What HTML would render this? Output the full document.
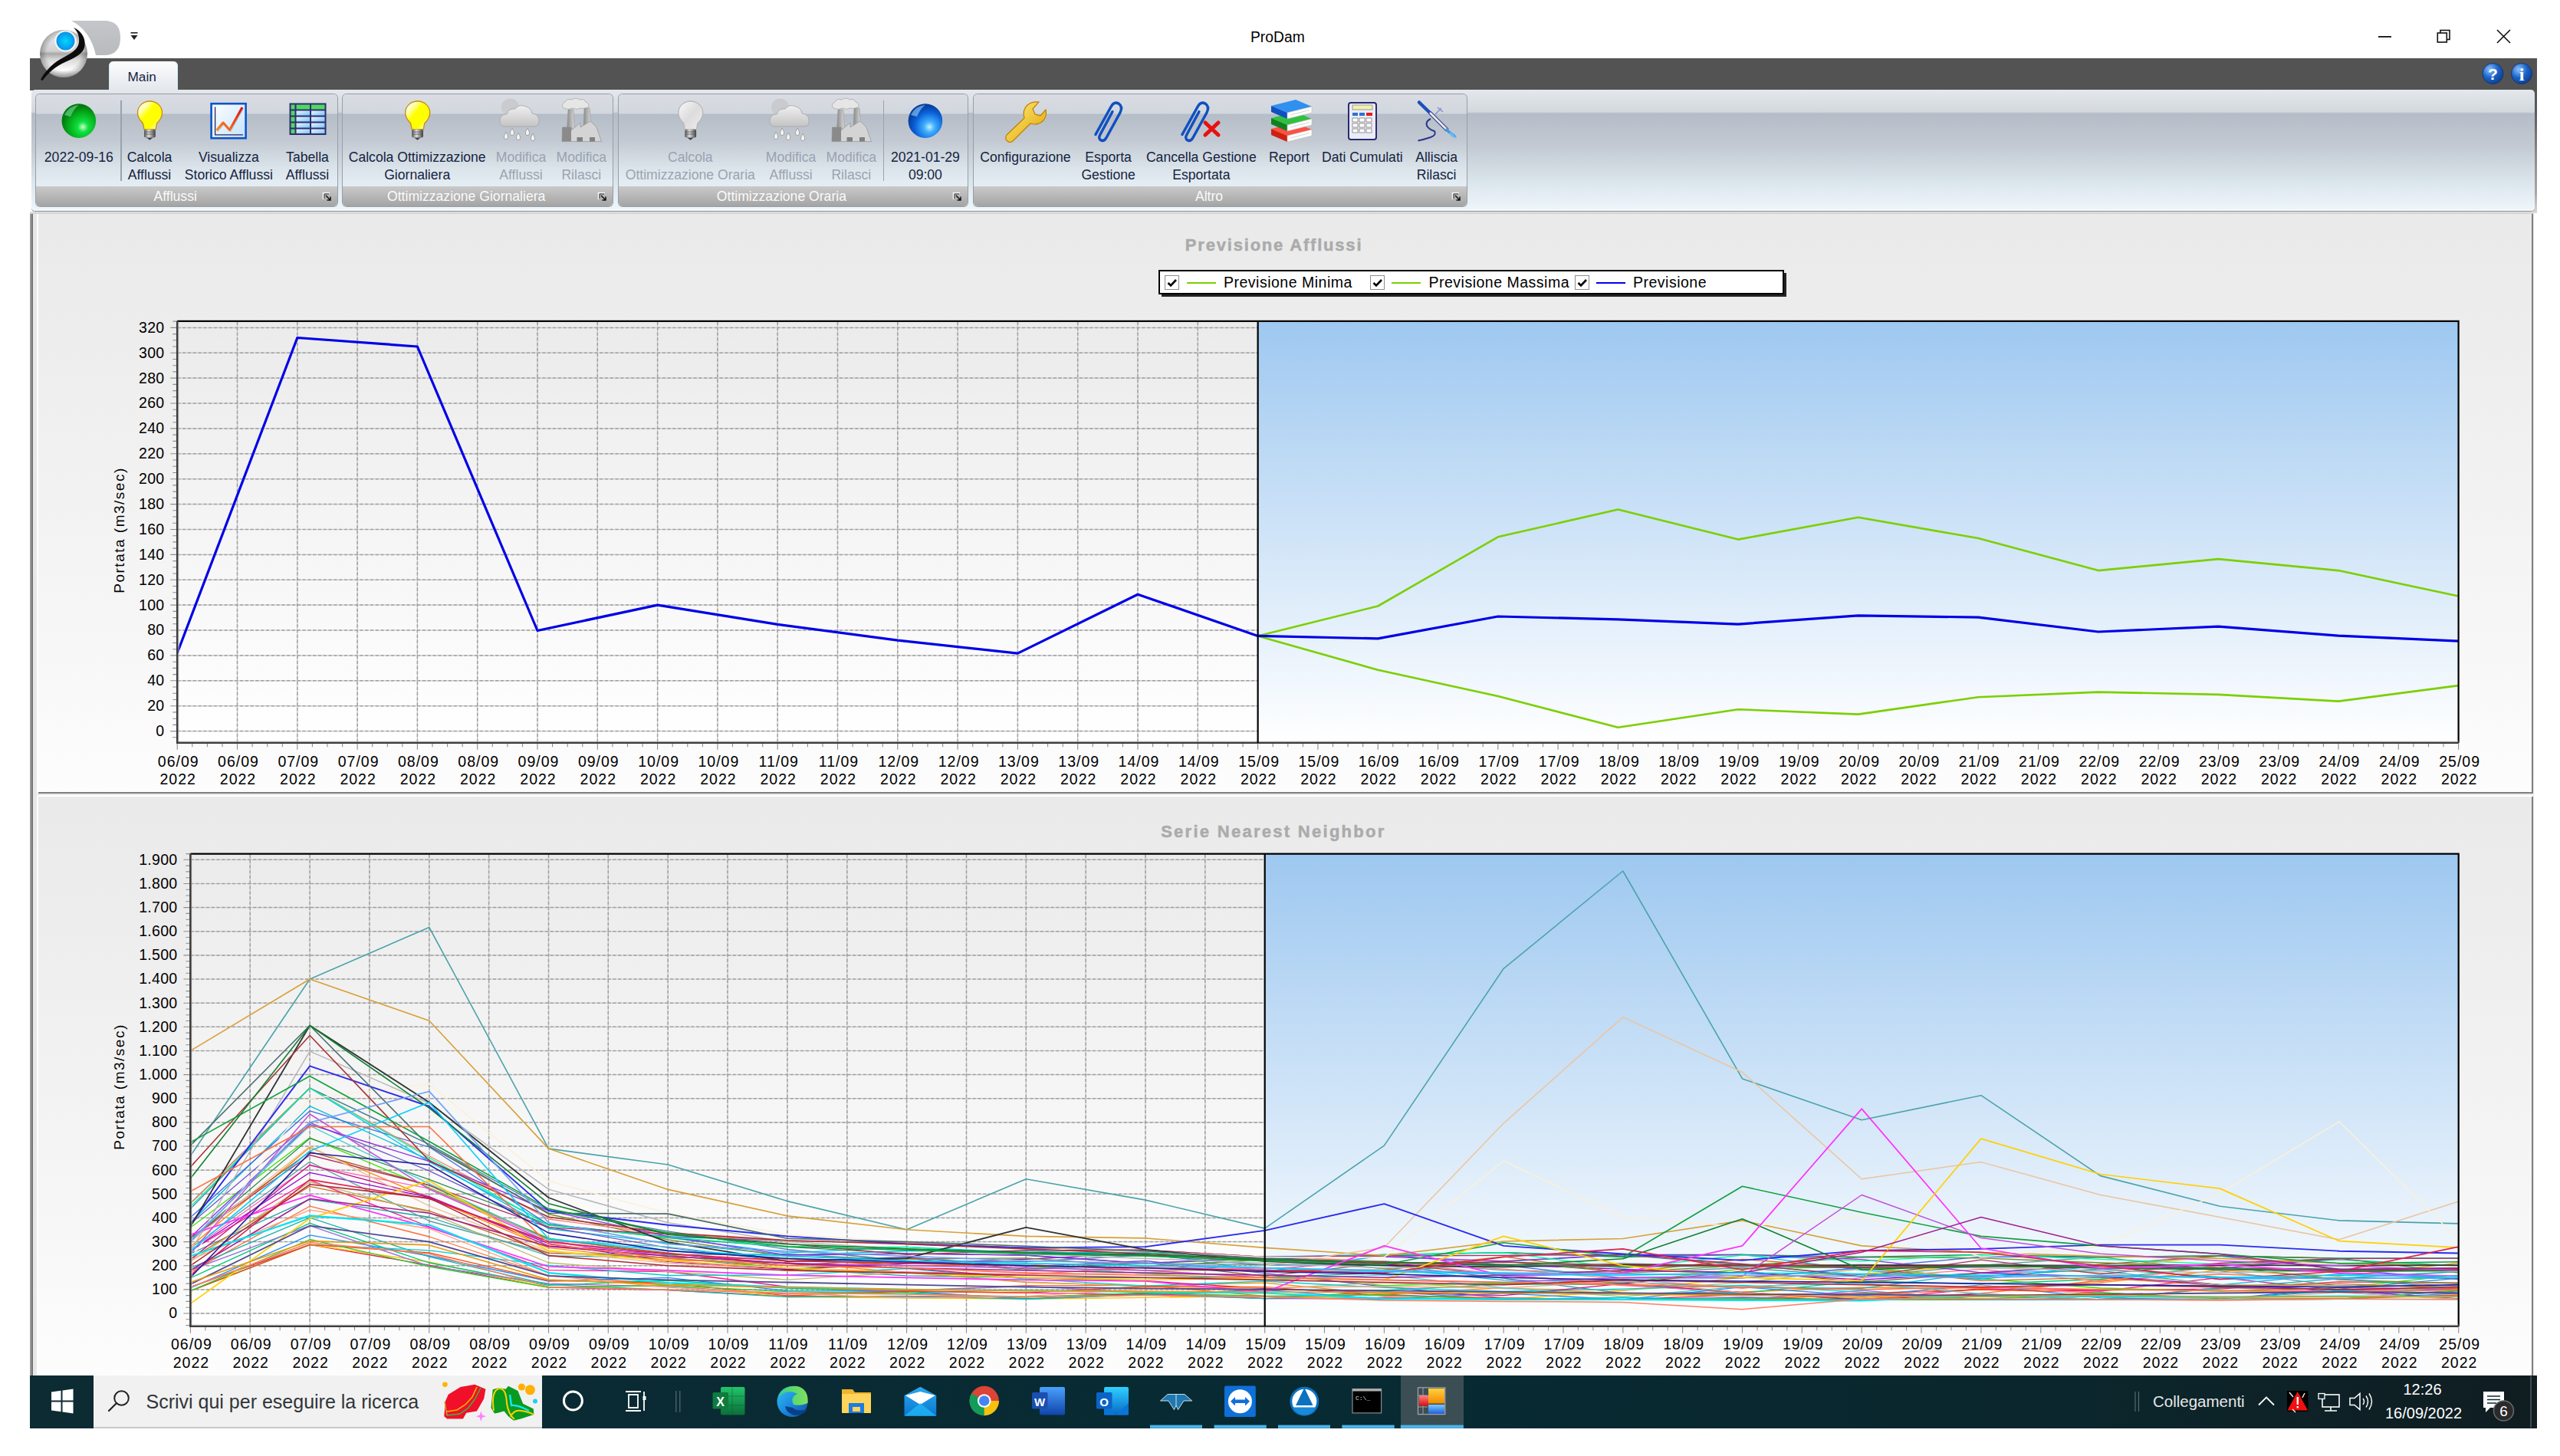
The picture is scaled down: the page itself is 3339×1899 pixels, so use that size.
<!DOCTYPE html>
<html><head><meta charset="utf-8">
<style>
html,body{margin:0;padding:0;}
body{width:3339px;height:1899px;position:relative;overflow:hidden;background:#fff;font-family:"Liberation Sans", sans-serif;}
.a{position:absolute;}
.t{position:absolute;white-space:nowrap;line-height:1;}
</style></head><body>
<div class="a" style="left:39px;top:76px;width:3270px;height:42px;background:#535353;"></div><div class="a" style="left:3303px;top:110px;width:6px;height:168px;background:linear-gradient(#535353 0%,#5a5a5a 20%,#8a8a8a 55%,#a8a8a8 85%,#d8d8d8 100%);"></div><div class="a" style="left:142px;top:79.5px;width:90px;height:40px;border-radius:6px 6px 0 0;background:linear-gradient(#fbfcfd,#e2e6eb);box-shadow:inset 1px 0 0 #cdeff5, inset -1px 0 0 #cdeff5;"></div><div class="t" style="left:166.5px;top:92px;font-size:17.2px;color:#15233f;">Main</div><svg class="a" style="left:3230px;top:80px" width="80" height="34" viewBox="3230 80 80 34">
<defs><radialGradient id="hlp" cx="0.35" cy="0.3" r="0.8"><stop offset="0" stop-color="#8fc3ff"/><stop offset="0.5" stop-color="#1a63c8"/><stop offset="1" stop-color="#0a3a8a"/></radialGradient></defs>
<circle cx="3251.5" cy="96" r="13.5" fill="url(#hlp)" stroke="#0c2f6a" stroke-width="0.8"/>
<text x="3251.5" y="104" font-family="Liberation Sans" font-weight="bold" font-size="21" fill="#fff" text-anchor="middle">?</text>
<circle cx="3289" cy="96" r="13.5" fill="url(#hlp)" stroke="#0c2f6a" stroke-width="0.8"/>
<text x="3289" y="105" font-family="Liberation Serif" font-weight="bold" font-size="24" fill="#fff" text-anchor="middle">i</text>
</svg><div class="a" style="left:41px;top:117px;width:3265px;height:157.5px;border-radius:5px;background:linear-gradient(#e4e8ec 0px,#d3d8de 29px,#b4bcc7 31px,#c3cad3 75px,#dbe5ec 120px,#eaf3f8 150px,#f1f7fa 159px);box-shadow:0 1px 0 #8c8c8c, 0 2px 0 #d4d4d4, inset 0 -2px 0 #f4f8fb;"></div><div class="a" style="left:47.4px;top:122.6px;width:392.9px;height:146.5px;border-radius:5px;overflow:hidden;box-shadow:0 0 0 1px #979ea6;background:linear-gradient(#d9dde3 0px,#d2d7dd 25px,#b5bdc8 26px,#c2c9d2 60px,#dae3ea 95px,#e6eef4 120px);"><div class="a" style="left:0;top:120.2px;width:392.9px;height:26.3px;background:linear-gradient(#c9c9c9,#a4a4a4);"></div></div><div class="t" style="left:28.7px;width:400px;text-align:center;top:247.5px;font-size:17.6px;color:#fafafa;">Afflussi</div><svg class="a" style="left:419.8px;top:249.5px" width="14" height="14" viewBox="0 0 14 14"><path d="M1.5 10 V1.5 H10" fill="none" stroke="#f4f4f4" stroke-width="1.6"/><path d="M3 9 V3 H9" fill="none" stroke="#333" stroke-width="1"/><path d="M5 5 L10.5 10.5 M6.5 11 H11 V6.5" fill="none" stroke="#111" stroke-width="1.5"/></svg><div class="a" style="left:447.3px;top:122.6px;width:352.0px;height:146.5px;border-radius:5px;overflow:hidden;box-shadow:0 0 0 1px #979ea6;background:linear-gradient(#d9dde3 0px,#d2d7dd 25px,#b5bdc8 26px,#c2c9d2 60px,#dae3ea 95px,#e6eef4 120px);"><div class="a" style="left:0;top:120.2px;width:352.0px;height:26.3px;background:linear-gradient(#c9c9c9,#a4a4a4);"></div></div><div class="t" style="left:408.2px;width:400px;text-align:center;top:247.5px;font-size:17.6px;color:#fafafa;">Ottimizzazione Giornaliera</div><svg class="a" style="left:778.8px;top:249.5px" width="14" height="14" viewBox="0 0 14 14"><path d="M1.5 10 V1.5 H10" fill="none" stroke="#f4f4f4" stroke-width="1.6"/><path d="M3 9 V3 H9" fill="none" stroke="#333" stroke-width="1"/><path d="M5 5 L10.5 10.5 M6.5 11 H11 V6.5" fill="none" stroke="#111" stroke-width="1.5"/></svg><div class="a" style="left:806.6px;top:122.6px;width:455.6px;height:146.5px;border-radius:5px;overflow:hidden;box-shadow:0 0 0 1px #979ea6;background:linear-gradient(#d9dde3 0px,#d2d7dd 25px,#b5bdc8 26px,#c2c9d2 60px,#dae3ea 95px,#e6eef4 120px);"><div class="a" style="left:0;top:120.2px;width:455.6px;height:26.3px;background:linear-gradient(#c9c9c9,#a4a4a4);"></div></div><div class="t" style="left:819.4px;width:400px;text-align:center;top:247.5px;font-size:17.6px;color:#fafafa;">Ottimizzazione Oraria</div><svg class="a" style="left:1241.7px;top:249.5px" width="14" height="14" viewBox="0 0 14 14"><path d="M1.5 10 V1.5 H10" fill="none" stroke="#f4f4f4" stroke-width="1.6"/><path d="M3 9 V3 H9" fill="none" stroke="#333" stroke-width="1"/><path d="M5 5 L10.5 10.5 M6.5 11 H11 V6.5" fill="none" stroke="#111" stroke-width="1.5"/></svg><div class="a" style="left:1269.8px;top:122.6px;width:643.7px;height:146.5px;border-radius:5px;overflow:hidden;box-shadow:0 0 0 1px #979ea6;background:linear-gradient(#d9dde3 0px,#d2d7dd 25px,#b5bdc8 26px,#c2c9d2 60px,#dae3ea 95px,#e6eef4 120px);"><div class="a" style="left:0;top:120.2px;width:643.7px;height:26.3px;background:linear-gradient(#c9c9c9,#a4a4a4);"></div></div><div class="t" style="left:1377.0px;width:400px;text-align:center;top:247.5px;font-size:17.6px;color:#fafafa;">Altro</div><svg class="a" style="left:1893.0px;top:249.5px" width="14" height="14" viewBox="0 0 14 14"><path d="M1.5 10 V1.5 H10" fill="none" stroke="#f4f4f4" stroke-width="1.6"/><path d="M3 9 V3 H9" fill="none" stroke="#333" stroke-width="1"/><path d="M5 5 L10.5 10.5 M6.5 11 H11 V6.5" fill="none" stroke="#111" stroke-width="1.5"/></svg><div class="t" style="left:-47.2px;width:300px;text-align:center;top:196.6px;font-size:17.6px;color:#15233f;">2022-09-16</div><div class="t" style="left:45.0px;width:300px;text-align:center;top:196.6px;font-size:17.6px;color:#15233f;">Calcola</div><div class="t" style="left:45.0px;width:300px;text-align:center;top:220.2px;font-size:17.6px;color:#15233f;">Afflussi</div><div class="t" style="left:148.4px;width:300px;text-align:center;top:196.6px;font-size:17.6px;color:#15233f;">Visualizza</div><div class="t" style="left:148.4px;width:300px;text-align:center;top:220.2px;font-size:17.6px;color:#15233f;">Storico Afflussi</div><div class="t" style="left:251.0px;width:300px;text-align:center;top:196.6px;font-size:17.6px;color:#15233f;">Tabella</div><div class="t" style="left:251.0px;width:300px;text-align:center;top:220.2px;font-size:17.6px;color:#15233f;">Afflussi</div><div class="t" style="left:394.2px;width:300px;text-align:center;top:196.6px;font-size:17.6px;color:#15233f;">Calcola Ottimizzazione</div><div class="t" style="left:394.2px;width:300px;text-align:center;top:220.2px;font-size:17.6px;color:#15233f;">Giornaliera</div><div class="t" style="left:529.5px;width:300px;text-align:center;top:196.6px;font-size:17.6px;color:#9aa3b0;">Modifica</div><div class="t" style="left:529.5px;width:300px;text-align:center;top:220.2px;font-size:17.6px;color:#9aa3b0;">Afflussi</div><div class="t" style="left:608.3px;width:300px;text-align:center;top:196.6px;font-size:17.6px;color:#9aa3b0;">Modifica</div><div class="t" style="left:608.3px;width:300px;text-align:center;top:220.2px;font-size:17.6px;color:#9aa3b0;">Rilasci</div><div class="t" style="left:750.3px;width:300px;text-align:center;top:196.6px;font-size:17.6px;color:#9aa3b0;">Calcola</div><div class="t" style="left:750.3px;width:300px;text-align:center;top:220.2px;font-size:17.6px;color:#9aa3b0;">Ottimizzazione Oraria</div><div class="t" style="left:881.6px;width:300px;text-align:center;top:196.6px;font-size:17.6px;color:#9aa3b0;">Modifica</div><div class="t" style="left:881.6px;width:300px;text-align:center;top:220.2px;font-size:17.6px;color:#9aa3b0;">Afflussi</div><div class="t" style="left:960.3px;width:300px;text-align:center;top:196.6px;font-size:17.6px;color:#9aa3b0;">Modifica</div><div class="t" style="left:960.3px;width:300px;text-align:center;top:220.2px;font-size:17.6px;color:#9aa3b0;">Rilasci</div><div class="t" style="left:1056.9px;width:300px;text-align:center;top:196.6px;font-size:17.6px;color:#15233f;">2021-01-29</div><div class="t" style="left:1056.9px;width:300px;text-align:center;top:220.2px;font-size:17.6px;color:#15233f;">09:00</div><div class="t" style="left:1187.4px;width:300px;text-align:center;top:196.6px;font-size:17.6px;color:#15233f;">Configurazione</div><div class="t" style="left:1295.6px;width:300px;text-align:center;top:196.6px;font-size:17.6px;color:#15233f;">Esporta</div><div class="t" style="left:1295.6px;width:300px;text-align:center;top:220.2px;font-size:17.6px;color:#15233f;">Gestione</div><div class="t" style="left:1416.8px;width:300px;text-align:center;top:196.6px;font-size:17.6px;color:#15233f;">Cancella Gestione</div><div class="t" style="left:1416.8px;width:300px;text-align:center;top:220.2px;font-size:17.6px;color:#15233f;">Esportata</div><div class="t" style="left:1531.5px;width:300px;text-align:center;top:196.6px;font-size:17.6px;color:#15233f;">Report</div><div class="t" style="left:1626.9px;width:300px;text-align:center;top:196.6px;font-size:17.6px;color:#15233f;">Dati Cumulati</div><div class="t" style="left:1723.6px;width:300px;text-align:center;top:196.6px;font-size:17.6px;color:#15233f;">Alliscia</div><div class="t" style="left:1723.6px;width:300px;text-align:center;top:220.2px;font-size:17.6px;color:#15233f;">Rilasci</div><div class="a" style="left:157.3px;top:130.5px;width:1.3px;height:105px;background:#9aa2ac;"></div><div class="a" style="left:1151.5px;top:130.5px;width:1.3px;height:105px;background:#9aa2ac;"></div><svg class="a" style="left:0;top:0" width="2000" height="200" viewBox="0 0 2000 200"><defs>
<radialGradient id="gorb" cx="0.62" cy="0.68" r="0.62"><stop offset="0" stop-color="#c8ffc8"/><stop offset="0.25" stop-color="#10e040"/><stop offset="0.7" stop-color="#04a818"/><stop offset="1" stop-color="#027a10"/></radialGradient>
<radialGradient id="borb" cx="0.62" cy="0.68" r="0.62"><stop offset="0" stop-color="#c8f0ff"/><stop offset="0.25" stop-color="#40b0ff"/><stop offset="0.7" stop-color="#0a60d8"/><stop offset="1" stop-color="#0640a0"/></radialGradient>
<linearGradient id="bulbg" x1="0.1" y1="0.1" x2="0.9" y2="0.9"><stop offset="0" stop-color="#ffffff"/><stop offset="0.2" stop-color="#ffffa0"/><stop offset="0.4" stop-color="#ffff00"/><stop offset="0.75" stop-color="#ffff00"/><stop offset="1" stop-color="#ffffd0"/></linearGradient><linearGradient id="chline" x1="0" y1="1" x2="1" y2="0"><stop offset="0" stop-color="#ff8a20"/><stop offset="1" stop-color="#d81010"/></linearGradient>
<linearGradient id="bulbgr" x1="0" y1="0" x2="1" y2="1"><stop offset="0" stop-color="#fafafa"/><stop offset="0.5" stop-color="#dcdcdc"/><stop offset="1" stop-color="#efefef"/></linearGradient>
<linearGradient id="baseg" x1="0" y1="0" x2="1" y2="0"><stop offset="0" stop-color="#505050"/><stop offset="0.4" stop-color="#e0e0e0"/><stop offset="1" stop-color="#404040"/></linearGradient>
<linearGradient id="chg" x1="0" y1="0" x2="1" y2="1"><stop offset="0" stop-color="#ffffff"/><stop offset="1" stop-color="#c4e2fa"/></linearGradient>
<linearGradient id="cellg" x1="0" y1="0" x2="1" y2="1"><stop offset="0" stop-color="#e8f6ff"/><stop offset="1" stop-color="#7cc4f4"/></linearGradient>
<linearGradient id="wrg" x1="0" y1="0" x2="1" y2="1"><stop offset="0" stop-color="#fff080"/><stop offset="1" stop-color="#e0a000"/></linearGradient>
<linearGradient id="cloudg" x1="0" y1="0" x2="0" y2="1"><stop offset="0" stop-color="#f0f0f0"/><stop offset="1" stop-color="#c4c4c4"/></linearGradient>
<linearGradient id="facg" x1="0" y1="0" x2="1" y2="0"><stop offset="0" stop-color="#8a8a8a"/><stop offset="1" stop-color="#d8d8d8"/></linearGradient>
</defs><circle cx="102.8" cy="157.6" r="22.3" fill="url(#gorb)"/><path d="M84 150 Q90 138 103 137 Q96 142 92 152 Z" fill="#6ad08a" opacity="0.7"/><g transform="translate(0.0,0)"><path d="M188 168.8 L186.5 161 Q179.5 154 179.5 147 A16 15 0 0 1 211.5 147 Q211.5 154 204.5 161 L203 168.8 Z" fill="url(#bulbg)" stroke="#c88a10" stroke-width="1.3"/><rect x="188" y="168.8" width="14.8" height="10.6" rx="2" fill="url(#baseg)"/><path d="M189 172 H202 M189 175 H202" stroke="#555" stroke-width="0.8"/><path d="M191 179.4 L199.5 179.4 L195.3 182.8 Z" fill="#444"/></g><g transform="translate(349.2,0)"><path d="M188 168.8 L186.5 161 Q179.5 154 179.5 147 A16 15 0 0 1 211.5 147 Q211.5 154 204.5 161 L203 168.8 Z" fill="url(#bulbg)" stroke="#c88a10" stroke-width="1.3"/><rect x="188" y="168.8" width="14.8" height="10.6" rx="2" fill="url(#baseg)"/><path d="M189 172 H202 M189 175 H202" stroke="#555" stroke-width="0.8"/><path d="M191 179.4 L199.5 179.4 L195.3 182.8 Z" fill="#444"/></g><g transform="translate(705.3,0)"><path d="M188 168.8 L186.5 161 Q179.5 154 179.5 147 A16 15 0 0 1 211.5 147 Q211.5 154 204.5 161 L203 168.8 Z" fill="url(#bulbgr)" stroke="#b8b8b8" stroke-width="1.3"/><rect x="188" y="168.8" width="14.8" height="10.6" rx="2" fill="url(#baseg)"/><path d="M189 172 H202 M189 175 H202" stroke="#555" stroke-width="0.8"/><path d="M191 179.4 L199.5 179.4 L195.3 182.8 Z" fill="#444"/></g><rect x="275.6" y="135.2" width="45" height="45" fill="url(#chg)" stroke="#0a56c8" stroke-width="2.6"/><path d="M280.6 139.4 V175.8 H316.9" fill="none" stroke="#27275e" stroke-width="1.3"/><path d="M283.5 171 L292 161 L300.5 170.5 L317 141" fill="none" stroke="#9ab0c8" stroke-width="3" stroke-linejoin="round" opacity="0.5"/><path d="M282.5 170 L291 160 L299.5 169.5 L316 140" fill="none" stroke="url(#chline)" stroke-width="3" stroke-linejoin="round"/><rect x="377.5" y="134.5" width="48" height="41.5" fill="#2e2e70"/><rect x="379.5" y="136.5" width="5.0" height="6.0" fill="#50d860"/><rect x="386.5" y="136.5" width="17.5" height="6.0" fill="#50d860"/><rect x="406" y="136.5" width="17.5" height="6.0" fill="#50d860"/><rect x="379.5" y="144.5" width="5.0" height="6.0" fill="#50d860"/><rect x="386.5" y="144.5" width="17.5" height="6.0" fill="url(#cellg)"/><rect x="406" y="144.5" width="17.5" height="6.0" fill="url(#cellg)"/><rect x="379.5" y="152.5" width="5.0" height="6.0" fill="#50d860"/><rect x="386.5" y="152.5" width="17.5" height="6.0" fill="url(#cellg)"/><rect x="406" y="152.5" width="17.5" height="6.0" fill="url(#cellg)"/><rect x="379.5" y="160.5" width="5.0" height="6.0" fill="#50d860"/><rect x="386.5" y="160.5" width="17.5" height="6.0" fill="url(#cellg)"/><rect x="406" y="160.5" width="17.5" height="6.0" fill="url(#cellg)"/><rect x="379.5" y="168.5" width="5.0" height="5.5" fill="#50d860"/><rect x="386.5" y="168.5" width="17.5" height="5.5" fill="url(#cellg)"/><rect x="406" y="168.5" width="17.5" height="5.5" fill="url(#cellg)"/><g transform="translate(0.0,0)"><circle cx="665.5" cy="140" r="11.5" fill="#c9cbce"/><path d="M657 165 Q651 163 652 156 Q653 149 661 149 Q663 141 672 142 Q677 135 686 139 Q693 141 694 148 Q702 149 703 156 Q704 165 696 165 Z" fill="url(#cloudg)" stroke="#a8a8a8" stroke-width="0.9"/><g fill="#f4f4f4" stroke="#a0a0a0" stroke-width="1"><path d="M660 172 q-3 5 -2.6 7.2 q0.6 2.4 2.6 2.4 q2 0 2.6 -2.4 q0.4 -2.2 -2.6 -7.2z"/><path d="M668 167 q-3 5 -2.6 7.2 q0.6 2.4 2.6 2.4 q2 0 2.6 -2.4 q0.4 -2.2 -2.6 -7.2z"/><path d="M676 173 q-3 5 -2.6 7.2 q0.6 2.4 2.6 2.4 q2 0 2.6 -2.4 q0.4 -2.2 -2.6 -7.2z"/><path d="M688 167 q-3 5 -2.6 7.2 q0.6 2.4 2.6 2.4 q2 0 2.6 -2.4 q0.4 -2.2 -2.6 -7.2z"/><path d="M695 174 q-3 5 -2.6 7.2 q0.6 2.4 2.6 2.4 q2 0 2.6 -2.4 q0.4 -2.2 -2.6 -7.2z"/></g></g><g transform="translate(352.1,0)"><circle cx="665.5" cy="140" r="11.5" fill="#c9cbce"/><path d="M657 165 Q651 163 652 156 Q653 149 661 149 Q663 141 672 142 Q677 135 686 139 Q693 141 694 148 Q702 149 703 156 Q704 165 696 165 Z" fill="url(#cloudg)" stroke="#a8a8a8" stroke-width="0.9"/><g fill="#f4f4f4" stroke="#a0a0a0" stroke-width="1"><path d="M660 172 q-3 5 -2.6 7.2 q0.6 2.4 2.6 2.4 q2 0 2.6 -2.4 q0.4 -2.2 -2.6 -7.2z"/><path d="M668 167 q-3 5 -2.6 7.2 q0.6 2.4 2.6 2.4 q2 0 2.6 -2.4 q0.4 -2.2 -2.6 -7.2z"/><path d="M676 173 q-3 5 -2.6 7.2 q0.6 2.4 2.6 2.4 q2 0 2.6 -2.4 q0.4 -2.2 -2.6 -7.2z"/><path d="M688 167 q-3 5 -2.6 7.2 q0.6 2.4 2.6 2.4 q2 0 2.6 -2.4 q0.4 -2.2 -2.6 -7.2z"/><path d="M695 174 q-3 5 -2.6 7.2 q0.6 2.4 2.6 2.4 q2 0 2.6 -2.4 q0.4 -2.2 -2.6 -7.2z"/></g></g><g transform="translate(0.0,0)"><path d="M735 141 Q731 136 737 133 Q739 128 746 130 Q751 126 756 130 Q762 128 764 133 Q770 135 767 140 Q763 143 757 141 Q752 144 747 141 Q741 144 735 141Z" fill="#e6e6e6" stroke="#a8a8a8" stroke-width="0.8"/><path d="M741 143 L748 143 L749.5 168 L739.5 168 Z" fill="url(#facg)" stroke="#999" stroke-width="0.6"/><path d="M762 141 L769 141 L771 165 L761 165 Z" fill="url(#facg)" stroke="#999" stroke-width="0.6"/><path d="M733 184.6 L733.5 166 L745 166 L745 170 L757 160 L757 166 L770 158 L778 166 L784.5 184.6 Z" fill="#d4d4d4" stroke="#9a9a9a" stroke-width="0.8"/><path d="M733 184.6 L733.5 166 L745 166 L745 184.6Z" fill="#8a8a8a"/><rect x="752.5" y="179" width="7.5" height="5.6" fill="#808080"/><rect x="769" y="179" width="7" height="5.6" fill="#808080"/></g><g transform="translate(352.0,0)"><path d="M735 141 Q731 136 737 133 Q739 128 746 130 Q751 126 756 130 Q762 128 764 133 Q770 135 767 140 Q763 143 757 141 Q752 144 747 141 Q741 144 735 141Z" fill="#e6e6e6" stroke="#a8a8a8" stroke-width="0.8"/><path d="M741 143 L748 143 L749.5 168 L739.5 168 Z" fill="url(#facg)" stroke="#999" stroke-width="0.6"/><path d="M762 141 L769 141 L771 165 L761 165 Z" fill="url(#facg)" stroke="#999" stroke-width="0.6"/><path d="M733 184.6 L733.5 166 L745 166 L745 170 L757 160 L757 166 L770 158 L778 166 L784.5 184.6 Z" fill="#d4d4d4" stroke="#9a9a9a" stroke-width="0.8"/><path d="M733 184.6 L733.5 166 L745 166 L745 184.6Z" fill="#8a8a8a"/><rect x="752.5" y="179" width="7.5" height="5.6" fill="#808080"/><rect x="769" y="179" width="7" height="5.6" fill="#808080"/></g><circle cx="1206.9" cy="157.6" r="22.3" fill="url(#borb)"/><path d="M1188 150 Q1194 138 1207 137 Q1200 142 1196 152 Z" fill="#9ad0ff" opacity="0.6"/><path transform="translate(0,5)" d="M1314 179 Q1310 176 1313 171 L1336 149 Q1333 139 1340 132 Q1346 127 1355 128 L1347 137 L1350 144 L1357 146 L1364 138 Q1366 147 1360 153 Q1353 159 1344 156 L1321 179 Q1317 182 1314 179 Z" fill="url(#wrg)" stroke="#c08000" stroke-width="1.2"/><g transform="translate(1429.0,0)"><path d="M0 40 L20 6 Q24 -1 30 2 Q36 6 32 13 L14 44 Q11 49 7 47 Q3 45 6 40 L22 12" fill="none" stroke="#1050c0" stroke-width="3.4" stroke-linecap="round" transform="translate(0,133) scale(1,1.06)"/></g><g transform="translate(1542.0,0)"><path d="M0 40 L20 6 Q24 -1 30 2 Q36 6 32 13 L14 44 Q11 49 7 47 Q3 45 6 40 L22 12" fill="none" stroke="#1050c0" stroke-width="3.4" stroke-linecap="round" transform="translate(0,133) scale(1,1.06)"/></g><path d="M1572 160 L1589 176 M1589 160 L1572 176" stroke="#e81010" stroke-width="5" stroke-linecap="round"/><path d="M1658 168 L1690 160 L1711 169 L1679 177 Z" fill="#ff5040"/><path d="M1658 168 L1679 177 L1679 185 L1658 176 Z" fill="#d02010"/><path d="M1679 177 L1711 169 L1711 177 L1679 185 Z" fill="#ffffff" stroke="#bbb" stroke-width="0.6"/><path d="M1683 180 L1708 173.5" stroke="#ccc" stroke-width="0.8"/><path d="M1658 154 L1690 146 L1711 155 L1679 163 Z" fill="#30c040"/><path d="M1658 154 L1679 163 L1679 171 L1658 162 Z" fill="#108020"/><path d="M1679 163 L1711 155 L1711 163 L1679 171 Z" fill="#ffffff" stroke="#bbb" stroke-width="0.6"/><path d="M1683 166 L1708 159.5" stroke="#ccc" stroke-width="0.8"/><path d="M1658 138 L1690 130 L1711 139 L1679 147 Z" fill="#3090f0"/><path d="M1658 138 L1679 147 L1679 155 L1658 146 Z" fill="#1050c0"/><path d="M1679 147 L1711 139 L1711 147 L1679 155 Z" fill="#ffffff" stroke="#bbb" stroke-width="0.6"/><path d="M1683 150 L1708 143.5" stroke="#ccc" stroke-width="0.8"/><rect x="1759" y="134" width="36" height="48" rx="3" fill="#ececf8" stroke="#2a2a70" stroke-width="2"/><rect x="1764" y="137" width="26" height="6" fill="#f0f0b0" stroke="#666" stroke-width="0.6"/><rect x="1764" y="147" width="7" height="4" fill="#3070d0"/><rect x="1773" y="147" width="7" height="4" fill="#3070d0"/><rect x="1782" y="147" width="8" height="4" fill="#e02020"/><g fill="#ffffff" stroke="#555" stroke-width="0.6"><rect x="1764" y="154" width="7" height="5"/><rect x="1773" y="154" width="7" height="5"/><rect x="1782" y="154" width="7" height="5"/><rect x="1764" y="161" width="7" height="5"/><rect x="1773" y="161" width="7" height="5"/><rect x="1782" y="161" width="7" height="5"/><rect x="1764" y="168" width="7" height="5"/><rect x="1773" y="168" width="7" height="5"/><rect x="1782" y="168" width="7" height="5"/></g><path d="M1851 133.5 L1866 148" stroke="#1a50b8" stroke-width="4.5" stroke-linecap="round"/><path d="M1865 147 L1888 170" stroke="#3a3f8a" stroke-width="5"/><path d="M1865 147 L1888 170" stroke="#e8eaf4" stroke-width="2.6"/><path d="M1886 167 L1898 176 L1900 180 L1895 179 L1885 170 Z" fill="#3a9ae8"/><path d="M1891 173 L1899 181" stroke="#8ad0ff" stroke-width="3" opacity="0.6"/><path d="M1872 149 L1880 141 M1875 140 L1882 146" stroke="#8a90c8" stroke-width="1.6"/><path d="M1866 155 Q1859 158 1861 164 Q1864 169 1871 171 Q1874 176 1866 179 Q1857 182 1849.5 183.5" fill="none" stroke="#2a3488" stroke-width="2"/></svg><svg class="a" style="left:0;top:0" width="240" height="120" viewBox="0 0 240 120">
<defs>
<linearGradient id="lgorb" x1="0" y1="0" x2="0" y2="1">
<stop offset="0" stop-color="#f6f6f6"/><stop offset="0.45" stop-color="#cfcfcf"/><stop offset="0.5" stop-color="#a8a8a8"/><stop offset="0.62" stop-color="#d8d8d8"/><stop offset="0.85" stop-color="#ffffff"/><stop offset="1" stop-color="#c8c8c8"/>
</linearGradient>
<radialGradient id="lgorb2" cx="0.5" cy="0.5" r="0.5"><stop offset="0.7" stop-color="#000" stop-opacity="0"/><stop offset="1" stop-color="#000" stop-opacity="0.28"/></radialGradient>
<linearGradient id="lgtab" x1="0" y1="0" x2="0" y2="1"><stop offset="0" stop-color="#c4c6ca"/><stop offset="1" stop-color="#b8babe"/></linearGradient>
<radialGradient id="lgblue" cx="0.5" cy="0.5" r="0.5"><stop offset="0" stop-color="#00d8ff"/><stop offset="1" stop-color="#0a90e8"/></radialGradient>
</defs>
<path d="M93 27 L136 27 Q157 27 157 49 Q157 72 136 72 L125 72 Q118 40 93 27 Z" fill="url(#lgtab)"/>
<circle cx="83" cy="70" r="31" fill="url(#lgorb)"/><circle cx="83" cy="70" r="31" fill="url(#lgorb2)"/><circle cx="85.5" cy="53.5" r="14" fill="#ffffff" opacity="0.8"/>
<circle cx="85.5" cy="53.5" r="12" fill="url(#lgblue)"/>
<path d="M96 36 C106 40 112 50 110.5 60 C109 70 98 75 86 80.5 C73 86 63 95 55.5 105 L53 104 C58 94 67 84 79 77 C92 70 101.5 65 103 55.5 C104 47 101 41 96 36 Z" fill="#0c0c0c"/>
<rect x="170.5" y="42" width="9" height="1.6" fill="#222"/>
<path d="M170.5 46 L179.5 46 L175 52 Z" fill="#222"/>
</svg><div class="t" style="left:1631px;top:39px;font-size:19.3px;color:#000;">ProDam</div><svg class="a" style="left:3090px;top:30px" width="200" height="36" viewBox="3090 30 200 36">
<rect x="3102" y="47" width="17" height="1.8" fill="#111"/>
<rect x="3183" y="39.5" width="12" height="12" fill="none" stroke="#111" stroke-width="1.6"/>
<rect x="3179.3" y="43" width="12" height="12" fill="#fff" stroke="#111" stroke-width="1.6"/>
<path d="M3257 39 L3274 56 M3274 39 L3257 56" stroke="#111" stroke-width="1.6"/>
</svg><div class="a" style="left:39px;top:276px;width:3266px;height:1518px;background:#e8e8e8;"></div><div class="a" style="left:39px;top:277px;width:3266px;height:2px;background:#d4d4d4;"></div><div class="a" style="left:39px;top:279px;width:4px;height:1515px;background:linear-gradient(90deg,#a8a8a8,#6a6a6a);"></div><div class="a" style="left:48px;top:279px;width:3255.7px;height:755.5999999999999px;background:linear-gradient(#eaeaea 0%,#ececec 15%,#f6f6f6 70%,#fdfdfd 100%);box-shadow:inset 2px 0px 0 #ffffff, inset -2px -2px 0 #7f7f7f;"></div><div class="a" style="left:48px;top:1037.3px;width:3255.7px;height:758.7px;background:linear-gradient(#eaeaea 0%,#ececec 15%,#f6f6f6 70%,#fdfdfd 100%);box-shadow:inset 2px 2px 0 #ffffff, inset -2px -2px 0 #7f7f7f;"></div><svg class="a" style="left:0;top:0" width="3339" height="1899" viewBox="0 0 3339 1899"><defs><linearGradient id="pg1" x1="0" y1="0" x2="0" y2="1"><stop offset="0" stop-color="#ebebeb"/><stop offset="1" stop-color="#ffffff"/></linearGradient><linearGradient id="bg1" x1="0" y1="0" x2="0" y2="1"><stop offset="0" stop-color="#9ec8f0"/><stop offset="1" stop-color="#ffffff"/></linearGradient><clipPath id="cp1"><rect x="231.25" y="418.8" width="2975.35" height="549.95"/></clipPath></defs><rect x="231.25" y="418.8" width="1409.38" height="549.95" fill="url(#pg1)"/><rect x="1640.63" y="418.8" width="1565.97" height="549.95" fill="url(#bg1)"/><path d="M309.5 419.8V968.75M387.8 419.8V968.75M466.1 419.8V968.75M544.4 419.8V968.75M622.7 419.8V968.75M701.0 419.8V968.75M779.3 419.8V968.75M857.6 419.8V968.75M935.9 419.8V968.75M1014.2 419.8V968.75M1092.5 419.8V968.75M1170.8 419.8V968.75M1249.1 419.8V968.75M1327.4 419.8V968.75M1405.7 419.8V968.75M1484.0 419.8V968.75M1562.3 419.8V968.75M231.25 953.6H1640.6M231.25 920.7H1640.6M231.25 887.8H1640.6M231.25 854.9H1640.6M231.25 822.0H1640.6M231.25 789.1H1640.6M231.25 756.3H1640.6M231.25 723.4H1640.6M231.25 690.5H1640.6M231.25 657.6H1640.6M231.25 624.7H1640.6M231.25 591.8H1640.6M231.25 558.9H1640.6M231.25 526.0H1640.6M231.25 493.1H1640.6M231.25 460.2H1640.6M231.25 427.4H1640.6" stroke="#cdcdcd" stroke-width="1.2" fill="none"/><path d="M309.5 419.8V968.75M387.8 419.8V968.75M466.1 419.8V968.75M544.4 419.8V968.75M622.7 419.8V968.75M701.0 419.8V968.75M779.3 419.8V968.75M857.6 419.8V968.75M935.9 419.8V968.75M1014.2 419.8V968.75M1092.5 419.8V968.75M1170.8 419.8V968.75M1249.1 419.8V968.75M1327.4 419.8V968.75M1405.7 419.8V968.75M1484.0 419.8V968.75M1562.3 419.8V968.75M231.25 953.6H1640.6M231.25 920.7H1640.6M231.25 887.8H1640.6M231.25 854.9H1640.6M231.25 822.0H1640.6M231.25 789.1H1640.6M231.25 756.3H1640.6M231.25 723.4H1640.6M231.25 690.5H1640.6M231.25 657.6H1640.6M231.25 624.7H1640.6M231.25 591.8H1640.6M231.25 558.9H1640.6M231.25 526.0H1640.6M231.25 493.1H1640.6M231.25 460.2H1640.6M231.25 427.4H1640.6" stroke="#a0a0a0" stroke-width="1.5" stroke-dasharray="4.3 2.5" fill="none"/><path d="M225.25 961.8H231.25M222.25 953.6H231.25M225.25 945.4H231.25M225.25 937.2H231.25M225.25 928.9H231.25M222.25 920.7H231.25M225.25 912.5H231.25M225.25 904.3H231.25M225.25 896.0H231.25M222.25 887.8H231.25M225.25 879.6H231.25M225.25 871.4H231.25M225.25 863.2H231.25M222.25 854.9H231.25M225.25 846.7H231.25M225.25 838.5H231.25M225.25 830.3H231.25M222.25 822.0H231.25M225.25 813.8H231.25M225.25 805.6H231.25M225.25 797.4H231.25M222.25 789.1H231.25M225.25 780.9H231.25M225.25 772.7H231.25M225.25 764.5H231.25M222.25 756.3H231.25M225.25 748.0H231.25M225.25 739.8H231.25M225.25 731.6H231.25M222.25 723.4H231.25M225.25 715.1H231.25M225.25 706.9H231.25M225.25 698.7H231.25M222.25 690.5H231.25M225.25 682.3H231.25M225.25 674.0H231.25M225.25 665.8H231.25M222.25 657.6H231.25M225.25 649.4H231.25M225.25 641.1H231.25M225.25 632.9H231.25M222.25 624.7H231.25M225.25 616.5H231.25M225.25 608.3H231.25M225.25 600.0H231.25M222.25 591.8H231.25M225.25 583.6H231.25M225.25 575.4H231.25M225.25 567.1H231.25M222.25 558.9H231.25M225.25 550.7H231.25M225.25 542.5H231.25M225.25 534.3H231.25M222.25 526.0H231.25M225.25 517.8H231.25M225.25 509.6H231.25M225.25 501.4H231.25M222.25 493.1H231.25M225.25 484.9H231.25M225.25 476.7H231.25M225.25 468.5H231.25M222.25 460.2H231.25M225.25 452.0H231.25M225.25 443.8H231.25M225.25 435.6H231.25M222.25 427.4H231.25M225.25 419.1H231.25M231.2 968.75V977.75M250.8 968.75V974.25M270.4 968.75V974.25M290.0 968.75V974.25M309.5 968.75V977.75M329.1 968.75V974.25M348.7 968.75V974.25M368.3 968.75V974.25M387.8 968.75V977.75M407.4 968.75V974.25M427.0 968.75V974.25M446.6 968.75V974.25M466.1 968.75V977.75M485.7 968.75V974.25M505.3 968.75V974.25M524.9 968.75V974.25M544.4 968.75V977.75M564.0 968.75V974.25M583.6 968.75V974.25M603.2 968.75V974.25M622.7 968.75V977.75M642.3 968.75V974.25M661.9 968.75V974.25M681.5 968.75V974.25M701.0 968.75V977.75M720.6 968.75V974.25M740.2 968.75V974.25M759.8 968.75V974.25M779.3 968.75V977.75M798.9 968.75V974.25M818.5 968.75V974.25M838.1 968.75V974.25M857.6 968.75V977.75M877.2 968.75V974.25M896.8 968.75V974.25M916.4 968.75V974.25M935.9 968.75V977.75M955.5 968.75V974.25M975.1 968.75V974.25M994.7 968.75V974.25M1014.2 968.75V977.75M1033.8 968.75V974.25M1053.4 968.75V974.25M1073.0 968.75V974.25M1092.5 968.75V977.75M1112.1 968.75V974.25M1131.7 968.75V974.25M1151.3 968.75V974.25M1170.8 968.75V977.75M1190.4 968.75V974.25M1210.0 968.75V974.25M1229.6 968.75V974.25M1249.1 968.75V977.75M1268.7 968.75V974.25M1288.3 968.75V974.25M1307.9 968.75V974.25M1327.4 968.75V977.75M1347.0 968.75V974.25M1366.6 968.75V974.25M1386.2 968.75V974.25M1405.7 968.75V977.75M1425.3 968.75V974.25M1444.9 968.75V974.25M1464.5 968.75V974.25M1484.0 968.75V977.75M1503.6 968.75V974.25M1523.2 968.75V974.25M1542.8 968.75V974.25M1562.3 968.75V977.75M1581.9 968.75V974.25M1601.5 968.75V974.25M1621.1 968.75V974.25M1640.6 968.75V977.75M1660.2 968.75V974.25M1679.8 968.75V974.25M1699.4 968.75V974.25M1718.9 968.75V977.75M1738.5 968.75V974.25M1758.1 968.75V974.25M1777.6 968.75V974.25M1797.2 968.75V977.75M1816.8 968.75V974.25M1836.4 968.75V974.25M1855.9 968.75V974.25M1875.5 968.75V977.75M1895.1 968.75V974.25M1914.7 968.75V974.25M1934.2 968.75V974.25M1953.8 968.75V977.75M1973.4 968.75V974.25M1993.0 968.75V974.25M2012.5 968.75V974.25M2032.1 968.75V977.75M2051.7 968.75V974.25M2071.3 968.75V974.25M2090.8 968.75V974.25M2110.4 968.75V977.75M2130.0 968.75V974.25M2149.6 968.75V974.25M2169.1 968.75V974.25M2188.7 968.75V977.75M2208.3 968.75V974.25M2227.9 968.75V974.25M2247.4 968.75V974.25M2267.0 968.75V977.75M2286.6 968.75V974.25M2306.2 968.75V974.25M2325.7 968.75V974.25M2345.3 968.75V977.75M2364.9 968.75V974.25M2384.5 968.75V974.25M2404.0 968.75V974.25M2423.6 968.75V977.75M2443.2 968.75V974.25M2462.8 968.75V974.25M2482.3 968.75V974.25M2501.9 968.75V977.75M2521.5 968.75V974.25M2541.1 968.75V974.25M2560.6 968.75V974.25M2580.2 968.75V977.75M2599.8 968.75V974.25M2619.4 968.75V974.25M2638.9 968.75V974.25M2658.5 968.75V977.75M2678.1 968.75V974.25M2697.7 968.75V974.25M2717.2 968.75V974.25M2736.8 968.75V977.75M2756.4 968.75V974.25M2776.0 968.75V974.25M2795.5 968.75V974.25M2815.1 968.75V977.75M2834.7 968.75V974.25M2854.3 968.75V974.25M2873.8 968.75V974.25M2893.4 968.75V977.75M2913.0 968.75V974.25M2932.6 968.75V974.25M2952.1 968.75V974.25M2971.7 968.75V977.75M2991.3 968.75V974.25M3010.9 968.75V974.25M3030.4 968.75V974.25M3050.0 968.75V977.75M3069.6 968.75V974.25M3089.2 968.75V974.25M3108.7 968.75V974.25M3128.3 968.75V977.75M3147.9 968.75V974.25M3167.5 968.75V974.25M3187.0 968.75V974.25M3206.6 968.75V977.75" stroke="#8e8e8e" stroke-width="1.1" fill="none"/><g clip-path="url(#cp1)" fill="none" stroke-linejoin="round"><polyline points="1640.6,829.4 1797.2,790.5 1953.8,700.3 2110.4,664.5 2267.0,703.6 2423.6,674.7 2580.2,702.0 2736.8,744.1 2893.4,729.1 3050.0,744.1 3206.6,777.6" stroke="#7ccf00" stroke-width="2.6"/><polyline points="1640.6,829.4 1797.2,873.8 1953.8,907.9 2110.4,948.8 2267.0,925.2 2423.6,931.6 2580.2,909.2 2736.8,902.6 2893.4,905.9 3050.0,914.6 3206.6,894.1" stroke="#7ccf00" stroke-width="2.6"/><polyline points="231.2,851.6 387.8,440.5 544.4,452.0 701.0,822.5 857.6,789.1 1014.2,814.3 1170.8,835.2 1327.4,852.1 1484.0,775.2 1640.6,829.4 1797.2,832.9 1953.8,804.0 2110.4,807.9 2267.0,814.1 2423.6,802.8 2580.2,805.1 2736.8,824.0 2893.4,817.1 3050.0,829.1 3206.6,836.2" stroke="#0000e8" stroke-width="3.2"/></g><path d="M231.25 418.8 H3206.6 V968.75" stroke="#000" stroke-width="2.2" fill="none"/><path d="M231.25 418.8 V968.75 H3206.6" stroke="#3c3c3c" stroke-width="2.6" fill="none"/><path d="M233.25 419.8 V966.75 H3206.6" stroke="#d8d8d8" stroke-width="1" fill="none" opacity="0.7"/><path d="M1640.63 418.8 V968.75" stroke="#000" stroke-width="2.2"/></svg><div class="t" style="left:14.5px;width:200px;text-align:right;top:944.0px;font-size:19.5px;letter-spacing:0.3px;color:#000;">0</div><div class="t" style="left:14.5px;width:200px;text-align:right;top:911.1px;font-size:19.5px;letter-spacing:0.3px;color:#000;">20</div><div class="t" style="left:14.5px;width:200px;text-align:right;top:878.2px;font-size:19.5px;letter-spacing:0.3px;color:#000;">40</div><div class="t" style="left:14.5px;width:200px;text-align:right;top:845.3px;font-size:19.5px;letter-spacing:0.3px;color:#000;">60</div><div class="t" style="left:14.5px;width:200px;text-align:right;top:812.4px;font-size:19.5px;letter-spacing:0.3px;color:#000;">80</div><div class="t" style="left:14.5px;width:200px;text-align:right;top:779.5px;font-size:19.5px;letter-spacing:0.3px;color:#000;">100</div><div class="t" style="left:14.5px;width:200px;text-align:right;top:746.7px;font-size:19.5px;letter-spacing:0.3px;color:#000;">120</div><div class="t" style="left:14.5px;width:200px;text-align:right;top:713.8px;font-size:19.5px;letter-spacing:0.3px;color:#000;">140</div><div class="t" style="left:14.5px;width:200px;text-align:right;top:680.9px;font-size:19.5px;letter-spacing:0.3px;color:#000;">160</div><div class="t" style="left:14.5px;width:200px;text-align:right;top:648.0px;font-size:19.5px;letter-spacing:0.3px;color:#000;">180</div><div class="t" style="left:14.5px;width:200px;text-align:right;top:615.1px;font-size:19.5px;letter-spacing:0.3px;color:#000;">200</div><div class="t" style="left:14.5px;width:200px;text-align:right;top:582.2px;font-size:19.5px;letter-spacing:0.3px;color:#000;">220</div><div class="t" style="left:14.5px;width:200px;text-align:right;top:549.3px;font-size:19.5px;letter-spacing:0.3px;color:#000;">240</div><div class="t" style="left:14.5px;width:200px;text-align:right;top:516.4px;font-size:19.5px;letter-spacing:0.3px;color:#000;">260</div><div class="t" style="left:14.5px;width:200px;text-align:right;top:483.5px;font-size:19.5px;letter-spacing:0.3px;color:#000;">280</div><div class="t" style="left:14.5px;width:200px;text-align:right;top:450.6px;font-size:19.5px;letter-spacing:0.3px;color:#000;">300</div><div class="t" style="left:14.5px;width:200px;text-align:right;top:417.8px;font-size:19.5px;letter-spacing:0.3px;color:#000;">320</div><div class="t" style="left:182.2px;width:100px;text-align:center;top:981.5px;font-size:19.5px;line-height:23.6px;letter-spacing:1.0px;text-indent:1px;color:#000;">06/09<br>2022</div><div class="t" style="left:260.5px;width:100px;text-align:center;top:981.5px;font-size:19.5px;line-height:23.6px;letter-spacing:1.0px;text-indent:1px;color:#000;">06/09<br>2022</div><div class="t" style="left:338.8px;width:100px;text-align:center;top:981.5px;font-size:19.5px;line-height:23.6px;letter-spacing:1.0px;text-indent:1px;color:#000;">07/09<br>2022</div><div class="t" style="left:417.1px;width:100px;text-align:center;top:981.5px;font-size:19.5px;line-height:23.6px;letter-spacing:1.0px;text-indent:1px;color:#000;">07/09<br>2022</div><div class="t" style="left:495.4px;width:100px;text-align:center;top:981.5px;font-size:19.5px;line-height:23.6px;letter-spacing:1.0px;text-indent:1px;color:#000;">08/09<br>2022</div><div class="t" style="left:573.7px;width:100px;text-align:center;top:981.5px;font-size:19.5px;line-height:23.6px;letter-spacing:1.0px;text-indent:1px;color:#000;">08/09<br>2022</div><div class="t" style="left:652.0px;width:100px;text-align:center;top:981.5px;font-size:19.5px;line-height:23.6px;letter-spacing:1.0px;text-indent:1px;color:#000;">09/09<br>2022</div><div class="t" style="left:730.3px;width:100px;text-align:center;top:981.5px;font-size:19.5px;line-height:23.6px;letter-spacing:1.0px;text-indent:1px;color:#000;">09/09<br>2022</div><div class="t" style="left:808.6px;width:100px;text-align:center;top:981.5px;font-size:19.5px;line-height:23.6px;letter-spacing:1.0px;text-indent:1px;color:#000;">10/09<br>2022</div><div class="t" style="left:886.9px;width:100px;text-align:center;top:981.5px;font-size:19.5px;line-height:23.6px;letter-spacing:1.0px;text-indent:1px;color:#000;">10/09<br>2022</div><div class="t" style="left:965.2px;width:100px;text-align:center;top:981.5px;font-size:19.5px;line-height:23.6px;letter-spacing:1.0px;text-indent:1px;color:#000;">11/09<br>2022</div><div class="t" style="left:1043.5px;width:100px;text-align:center;top:981.5px;font-size:19.5px;line-height:23.6px;letter-spacing:1.0px;text-indent:1px;color:#000;">11/09<br>2022</div><div class="t" style="left:1121.8px;width:100px;text-align:center;top:981.5px;font-size:19.5px;line-height:23.6px;letter-spacing:1.0px;text-indent:1px;color:#000;">12/09<br>2022</div><div class="t" style="left:1200.1px;width:100px;text-align:center;top:981.5px;font-size:19.5px;line-height:23.6px;letter-spacing:1.0px;text-indent:1px;color:#000;">12/09<br>2022</div><div class="t" style="left:1278.4px;width:100px;text-align:center;top:981.5px;font-size:19.5px;line-height:23.6px;letter-spacing:1.0px;text-indent:1px;color:#000;">13/09<br>2022</div><div class="t" style="left:1356.7px;width:100px;text-align:center;top:981.5px;font-size:19.5px;line-height:23.6px;letter-spacing:1.0px;text-indent:1px;color:#000;">13/09<br>2022</div><div class="t" style="left:1435.0px;width:100px;text-align:center;top:981.5px;font-size:19.5px;line-height:23.6px;letter-spacing:1.0px;text-indent:1px;color:#000;">14/09<br>2022</div><div class="t" style="left:1513.3px;width:100px;text-align:center;top:981.5px;font-size:19.5px;line-height:23.6px;letter-spacing:1.0px;text-indent:1px;color:#000;">14/09<br>2022</div><div class="t" style="left:1591.6px;width:100px;text-align:center;top:981.5px;font-size:19.5px;line-height:23.6px;letter-spacing:1.0px;text-indent:1px;color:#000;">15/09<br>2022</div><div class="t" style="left:1669.9px;width:100px;text-align:center;top:981.5px;font-size:19.5px;line-height:23.6px;letter-spacing:1.0px;text-indent:1px;color:#000;">15/09<br>2022</div><div class="t" style="left:1748.2px;width:100px;text-align:center;top:981.5px;font-size:19.5px;line-height:23.6px;letter-spacing:1.0px;text-indent:1px;color:#000;">16/09<br>2022</div><div class="t" style="left:1826.5px;width:100px;text-align:center;top:981.5px;font-size:19.5px;line-height:23.6px;letter-spacing:1.0px;text-indent:1px;color:#000;">16/09<br>2022</div><div class="t" style="left:1904.8px;width:100px;text-align:center;top:981.5px;font-size:19.5px;line-height:23.6px;letter-spacing:1.0px;text-indent:1px;color:#000;">17/09<br>2022</div><div class="t" style="left:1983.1px;width:100px;text-align:center;top:981.5px;font-size:19.5px;line-height:23.6px;letter-spacing:1.0px;text-indent:1px;color:#000;">17/09<br>2022</div><div class="t" style="left:2061.4px;width:100px;text-align:center;top:981.5px;font-size:19.5px;line-height:23.6px;letter-spacing:1.0px;text-indent:1px;color:#000;">18/09<br>2022</div><div class="t" style="left:2139.7px;width:100px;text-align:center;top:981.5px;font-size:19.5px;line-height:23.6px;letter-spacing:1.0px;text-indent:1px;color:#000;">18/09<br>2022</div><div class="t" style="left:2218.0px;width:100px;text-align:center;top:981.5px;font-size:19.5px;line-height:23.6px;letter-spacing:1.0px;text-indent:1px;color:#000;">19/09<br>2022</div><div class="t" style="left:2296.3px;width:100px;text-align:center;top:981.5px;font-size:19.5px;line-height:23.6px;letter-spacing:1.0px;text-indent:1px;color:#000;">19/09<br>2022</div><div class="t" style="left:2374.6px;width:100px;text-align:center;top:981.5px;font-size:19.5px;line-height:23.6px;letter-spacing:1.0px;text-indent:1px;color:#000;">20/09<br>2022</div><div class="t" style="left:2452.9px;width:100px;text-align:center;top:981.5px;font-size:19.5px;line-height:23.6px;letter-spacing:1.0px;text-indent:1px;color:#000;">20/09<br>2022</div><div class="t" style="left:2531.2px;width:100px;text-align:center;top:981.5px;font-size:19.5px;line-height:23.6px;letter-spacing:1.0px;text-indent:1px;color:#000;">21/09<br>2022</div><div class="t" style="left:2609.5px;width:100px;text-align:center;top:981.5px;font-size:19.5px;line-height:23.6px;letter-spacing:1.0px;text-indent:1px;color:#000;">21/09<br>2022</div><div class="t" style="left:2687.8px;width:100px;text-align:center;top:981.5px;font-size:19.5px;line-height:23.6px;letter-spacing:1.0px;text-indent:1px;color:#000;">22/09<br>2022</div><div class="t" style="left:2766.1px;width:100px;text-align:center;top:981.5px;font-size:19.5px;line-height:23.6px;letter-spacing:1.0px;text-indent:1px;color:#000;">22/09<br>2022</div><div class="t" style="left:2844.4px;width:100px;text-align:center;top:981.5px;font-size:19.5px;line-height:23.6px;letter-spacing:1.0px;text-indent:1px;color:#000;">23/09<br>2022</div><div class="t" style="left:2922.7px;width:100px;text-align:center;top:981.5px;font-size:19.5px;line-height:23.6px;letter-spacing:1.0px;text-indent:1px;color:#000;">23/09<br>2022</div><div class="t" style="left:3001.0px;width:100px;text-align:center;top:981.5px;font-size:19.5px;line-height:23.6px;letter-spacing:1.0px;text-indent:1px;color:#000;">24/09<br>2022</div><div class="t" style="left:3079.3px;width:100px;text-align:center;top:981.5px;font-size:19.5px;line-height:23.6px;letter-spacing:1.0px;text-indent:1px;color:#000;">24/09<br>2022</div><div class="t" style="left:3157.6px;width:100px;text-align:center;top:981.5px;font-size:19.5px;line-height:23.6px;letter-spacing:1.0px;text-indent:1px;color:#000;">25/09<br>2022</div><div class="t" style="left:55.400000000000006px;width:200px;text-align:center;top:681.7px;font-size:19px;letter-spacing:1.5px;color:#000;transform:rotate(-90deg);">Portata (m3/sec)</div><div class="t" style="left:1361.6px;width:600px;text-align:center;top:309.1px;font-size:22px;font-weight:bold;letter-spacing:1.8px;color:#ababab;-webkit-text-stroke:0.5px #ababab;">Previsione Afflussi</div><div class="a" style="left:1515px;top:356px;width:815px;height:31px;background:#000;opacity:0.85;"></div><div class="a" style="left:1511px;top:352px;width:811.5px;height:27.5px;background:#fff;border:2px solid #000;"></div><div class="a" style="left:1519px;top:359px;width:17px;height:17px;border:1.5px solid #8e8e8e;background:#fff;"></div><svg class="a" style="left:1522px;top:363px" width="14" height="12" viewBox="0 0 14 12"><path d="M1.5 6 L5 9.5 L12 2" stroke="#000" stroke-width="2.6" fill="none"/></svg><div class="a" style="left:1547.5px;top:367.8px;width:38.2px;height:2.6px;background:#7ccf00;"></div><div class="t" style="left:1596px;top:358.5px;font-size:19.5px;letter-spacing:0.5px;color:#000;">Previsione Minima</div><div class="a" style="left:1786.5px;top:359px;width:17px;height:17px;border:1.5px solid #8e8e8e;background:#fff;"></div><svg class="a" style="left:1789.5px;top:363px" width="14" height="12" viewBox="0 0 14 12"><path d="M1.5 6 L5 9.5 L12 2" stroke="#000" stroke-width="2.6" fill="none"/></svg><div class="a" style="left:1814.7px;top:367.8px;width:38.3px;height:2.6px;background:#7ccf00;"></div><div class="t" style="left:1863.5px;top:358.5px;font-size:19.5px;letter-spacing:0.5px;color:#000;">Previsione Massima</div><div class="a" style="left:2053.8px;top:359px;width:17px;height:17px;border:1.5px solid #8e8e8e;background:#fff;"></div><svg class="a" style="left:2056.8px;top:363px" width="14" height="12" viewBox="0 0 14 12"><path d="M1.5 6 L5 9.5 L12 2" stroke="#000" stroke-width="2.6" fill="none"/></svg><div class="a" style="left:2081.7px;top:367.8px;width:38.3px;height:2.6px;background:#0000e8;"></div><div class="t" style="left:2130px;top:358.5px;font-size:19.5px;letter-spacing:0.5px;color:#000;">Previsione</div><svg class="a" style="left:0;top:0" width="3339" height="1899" viewBox="0 0 3339 1899"><defs><linearGradient id="pg2" x1="0" y1="0" x2="0" y2="1"><stop offset="0" stop-color="#ebebeb"/><stop offset="1" stop-color="#ffffff"/></linearGradient><linearGradient id="bg2" x1="0" y1="0" x2="0" y2="1"><stop offset="0" stop-color="#9ec8f0"/><stop offset="1" stop-color="#ffffff"/></linearGradient><clipPath id="cp2"><rect x="248.4" y="1113.6" width="2958.2999999999997" height="616.2"/></clipPath></defs><rect x="248.4" y="1113.6" width="1401.30" height="616.2" fill="url(#pg2)"/><rect x="1649.70" y="1113.6" width="1557.00" height="616.2" fill="url(#bg2)"/><path d="M326.2 1114.6V1729.8M404.1 1114.6V1729.8M481.9 1114.6V1729.8M559.8 1114.6V1729.8M637.6 1114.6V1729.8M715.5 1114.6V1729.8M793.3 1114.6V1729.8M871.2 1114.6V1729.8M949.0 1114.6V1729.8M1026.9 1114.6V1729.8M1104.8 1114.6V1729.8M1182.6 1114.6V1729.8M1260.5 1114.6V1729.8M1338.3 1114.6V1729.8M1416.2 1114.6V1729.8M1494.0 1114.6V1729.8M1571.8 1114.6V1729.8M248.4 1713.0H1649.7M248.4 1681.9H1649.7M248.4 1650.7H1649.7M248.4 1619.6H1649.7M248.4 1588.4H1649.7M248.4 1557.3H1649.7M248.4 1526.2H1649.7M248.4 1495.0H1649.7M248.4 1463.9H1649.7M248.4 1432.7H1649.7M248.4 1401.6H1649.7M248.4 1370.5H1649.7M248.4 1339.3H1649.7M248.4 1308.2H1649.7M248.4 1277.0H1649.7M248.4 1245.9H1649.7M248.4 1214.8H1649.7M248.4 1183.6H1649.7M248.4 1152.5H1649.7M248.4 1121.3H1649.7" stroke="#cdcdcd" stroke-width="1.2" fill="none"/><path d="M326.2 1114.6V1729.8M404.1 1114.6V1729.8M481.9 1114.6V1729.8M559.8 1114.6V1729.8M637.6 1114.6V1729.8M715.5 1114.6V1729.8M793.3 1114.6V1729.8M871.2 1114.6V1729.8M949.0 1114.6V1729.8M1026.9 1114.6V1729.8M1104.8 1114.6V1729.8M1182.6 1114.6V1729.8M1260.5 1114.6V1729.8M1338.3 1114.6V1729.8M1416.2 1114.6V1729.8M1494.0 1114.6V1729.8M1571.8 1114.6V1729.8M248.4 1713.0H1649.7M248.4 1681.9H1649.7M248.4 1650.7H1649.7M248.4 1619.6H1649.7M248.4 1588.4H1649.7M248.4 1557.3H1649.7M248.4 1526.2H1649.7M248.4 1495.0H1649.7M248.4 1463.9H1649.7M248.4 1432.7H1649.7M248.4 1401.6H1649.7M248.4 1370.5H1649.7M248.4 1339.3H1649.7M248.4 1308.2H1649.7M248.4 1277.0H1649.7M248.4 1245.9H1649.7M248.4 1214.8H1649.7M248.4 1183.6H1649.7M248.4 1152.5H1649.7M248.4 1121.3H1649.7" stroke="#a0a0a0" stroke-width="1.5" stroke-dasharray="4.3 2.5" fill="none"/><path d="M242.4 1728.6H248.4M242.4 1720.8H248.4M239.4 1713.0H248.4M242.4 1705.2H248.4M242.4 1697.4H248.4M242.4 1689.6H248.4M239.4 1681.9H248.4M242.4 1674.1H248.4M242.4 1666.3H248.4M242.4 1658.5H248.4M239.4 1650.7H248.4M242.4 1642.9H248.4M242.4 1635.2H248.4M242.4 1627.4H248.4M239.4 1619.6H248.4M242.4 1611.8H248.4M242.4 1604.0H248.4M242.4 1596.2H248.4M239.4 1588.4H248.4M242.4 1580.7H248.4M242.4 1572.9H248.4M242.4 1565.1H248.4M239.4 1557.3H248.4M242.4 1549.5H248.4M242.4 1541.7H248.4M242.4 1533.9H248.4M239.4 1526.2H248.4M242.4 1518.4H248.4M242.4 1510.6H248.4M242.4 1502.8H248.4M239.4 1495.0H248.4M242.4 1487.2H248.4M242.4 1479.5H248.4M242.4 1471.7H248.4M239.4 1463.9H248.4M242.4 1456.1H248.4M242.4 1448.3H248.4M242.4 1440.5H248.4M239.4 1432.7H248.4M242.4 1425.0H248.4M242.4 1417.2H248.4M242.4 1409.4H248.4M239.4 1401.6H248.4M242.4 1393.8H248.4M242.4 1386.0H248.4M242.4 1378.2H248.4M239.4 1370.5H248.4M242.4 1362.7H248.4M242.4 1354.9H248.4M242.4 1347.1H248.4M239.4 1339.3H248.4M242.4 1331.5H248.4M242.4 1323.8H248.4M242.4 1316.0H248.4M239.4 1308.2H248.4M242.4 1300.4H248.4M242.4 1292.6H248.4M242.4 1284.8H248.4M239.4 1277.0H248.4M242.4 1269.3H248.4M242.4 1261.5H248.4M242.4 1253.7H248.4M239.4 1245.9H248.4M242.4 1238.1H248.4M242.4 1230.3H248.4M242.4 1222.5H248.4M239.4 1214.8H248.4M242.4 1207.0H248.4M242.4 1199.2H248.4M242.4 1191.4H248.4M239.4 1183.6H248.4M242.4 1175.8H248.4M242.4 1168.0H248.4M242.4 1160.3H248.4M239.4 1152.5H248.4M242.4 1144.7H248.4M242.4 1136.9H248.4M242.4 1129.1H248.4M239.4 1121.3H248.4M242.4 1113.6H248.4M248.4 1729.8V1738.8M267.9 1729.8V1735.3M287.3 1729.8V1735.3M306.8 1729.8V1735.3M326.2 1729.8V1738.8M345.7 1729.8V1735.3M365.2 1729.8V1735.3M384.6 1729.8V1735.3M404.1 1729.8V1738.8M423.6 1729.8V1735.3M443.0 1729.8V1735.3M462.5 1729.8V1735.3M481.9 1729.8V1738.8M501.4 1729.8V1735.3M520.9 1729.8V1735.3M540.3 1729.8V1735.3M559.8 1729.8V1738.8M579.3 1729.8V1735.3M598.7 1729.8V1735.3M618.2 1729.8V1735.3M637.6 1729.8V1738.8M657.1 1729.8V1735.3M676.6 1729.8V1735.3M696.0 1729.8V1735.3M715.5 1729.8V1738.8M735.0 1729.8V1735.3M754.4 1729.8V1735.3M773.9 1729.8V1735.3M793.3 1729.8V1738.8M812.8 1729.8V1735.3M832.3 1729.8V1735.3M851.7 1729.8V1735.3M871.2 1729.8V1738.8M890.7 1729.8V1735.3M910.1 1729.8V1735.3M929.6 1729.8V1735.3M949.0 1729.8V1738.8M968.5 1729.8V1735.3M988.0 1729.8V1735.3M1007.4 1729.8V1735.3M1026.9 1729.8V1738.8M1046.4 1729.8V1735.3M1065.8 1729.8V1735.3M1085.3 1729.8V1735.3M1104.8 1729.8V1738.8M1124.2 1729.8V1735.3M1143.7 1729.8V1735.3M1163.1 1729.8V1735.3M1182.6 1729.8V1738.8M1202.1 1729.8V1735.3M1221.5 1729.8V1735.3M1241.0 1729.8V1735.3M1260.5 1729.8V1738.8M1279.9 1729.8V1735.3M1299.4 1729.8V1735.3M1318.8 1729.8V1735.3M1338.3 1729.8V1738.8M1357.8 1729.8V1735.3M1377.2 1729.8V1735.3M1396.7 1729.8V1735.3M1416.2 1729.8V1738.8M1435.6 1729.8V1735.3M1455.1 1729.8V1735.3M1474.5 1729.8V1735.3M1494.0 1729.8V1738.8M1513.5 1729.8V1735.3M1532.9 1729.8V1735.3M1552.4 1729.8V1735.3M1571.8 1729.8V1738.8M1591.3 1729.8V1735.3M1610.8 1729.8V1735.3M1630.2 1729.8V1735.3M1649.7 1729.8V1738.8M1669.2 1729.8V1735.3M1688.6 1729.8V1735.3M1708.1 1729.8V1735.3M1727.5 1729.8V1738.8M1747.0 1729.8V1735.3M1766.5 1729.8V1735.3M1785.9 1729.8V1735.3M1805.4 1729.8V1738.8M1824.9 1729.8V1735.3M1844.3 1729.8V1735.3M1863.8 1729.8V1735.3M1883.2 1729.8V1738.8M1902.7 1729.8V1735.3M1922.2 1729.8V1735.3M1941.6 1729.8V1735.3M1961.1 1729.8V1738.8M1980.6 1729.8V1735.3M2000.0 1729.8V1735.3M2019.5 1729.8V1735.3M2039.0 1729.8V1738.8M2058.4 1729.8V1735.3M2077.9 1729.8V1735.3M2097.3 1729.8V1735.3M2116.8 1729.8V1738.8M2136.3 1729.8V1735.3M2155.7 1729.8V1735.3M2175.2 1729.8V1735.3M2194.6 1729.8V1738.8M2214.1 1729.8V1735.3M2233.6 1729.8V1735.3M2253.0 1729.8V1735.3M2272.5 1729.8V1738.8M2292.0 1729.8V1735.3M2311.4 1729.8V1735.3M2330.9 1729.8V1735.3M2350.3 1729.8V1738.8M2369.8 1729.8V1735.3M2389.3 1729.8V1735.3M2408.7 1729.8V1735.3M2428.2 1729.8V1738.8M2447.7 1729.8V1735.3M2467.1 1729.8V1735.3M2486.6 1729.8V1735.3M2506.0 1729.8V1738.8M2525.5 1729.8V1735.3M2545.0 1729.8V1735.3M2564.4 1729.8V1735.3M2583.9 1729.8V1738.8M2603.4 1729.8V1735.3M2622.8 1729.8V1735.3M2642.3 1729.8V1735.3M2661.8 1729.8V1738.8M2681.2 1729.8V1735.3M2700.7 1729.8V1735.3M2720.1 1729.8V1735.3M2739.6 1729.8V1738.8M2759.1 1729.8V1735.3M2778.5 1729.8V1735.3M2798.0 1729.8V1735.3M2817.4 1729.8V1738.8M2836.9 1729.8V1735.3M2856.4 1729.8V1735.3M2875.8 1729.8V1735.3M2895.3 1729.8V1738.8M2914.8 1729.8V1735.3M2934.2 1729.8V1735.3M2953.7 1729.8V1735.3M2973.2 1729.8V1738.8M2992.6 1729.8V1735.3M3012.1 1729.8V1735.3M3031.5 1729.8V1735.3M3051.0 1729.8V1738.8M3070.5 1729.8V1735.3M3089.9 1729.8V1735.3M3109.4 1729.8V1735.3M3128.8 1729.8V1738.8M3148.3 1729.8V1735.3M3167.8 1729.8V1735.3M3187.2 1729.8V1735.3M3206.7 1729.8V1738.8" stroke="#8e8e8e" stroke-width="1.1" fill="none"/><g clip-path="url(#cp2)" fill="none" stroke-linejoin="round"><polyline points="248.4,1678.7 404.1,1623.3 559.8,1650.1 715.5,1679.1 871.2,1682.5 1026.9,1690.9 1182.6,1690.9 1338.3,1691.5 1494.0,1687.5 1649.7,1693.7 1805.4,1692.4 1961.1,1694.9 2116.8,1694.9 2272.5,1688.7 2428.2,1686.8 2583.9,1681.9 2739.6,1682.8 2895.3,1681.2 3051.0,1671.9 3206.7,1673.1" stroke="#e0204a" stroke-width="1.3"/><polyline points="248.4,1631.4 404.1,1539.2 559.8,1600.0 715.5,1656.6 871.2,1658.5 1026.9,1678.4 1182.6,1684.0 1338.3,1686.2 1494.0,1688.4 1649.7,1691.2 1805.4,1688.1 1961.1,1694.9 2116.8,1694.6 2272.5,1695.3 2428.2,1695.3 2583.9,1680.6 2739.6,1684.0 2895.3,1666.3 3051.0,1682.5 3206.7,1680.6" stroke="#ff1493" stroke-width="1.3"/><polyline points="248.4,1625.8 404.1,1496.6 559.8,1562.3 715.5,1627.7 871.2,1643.6 1026.9,1646.7 1182.6,1659.8 1338.3,1672.5 1494.0,1677.2 1649.7,1673.1 1805.4,1688.1 1961.1,1679.7 2116.8,1687.2 2272.5,1685.0 2428.2,1679.1 2583.9,1680.0 2739.6,1672.8 2895.3,1656.9 3051.0,1664.4 3206.7,1647.3" stroke="#ff8c00" stroke-width="1.3"/><polyline points="248.4,1659.4 404.1,1573.2 559.8,1613.0 715.5,1663.5 871.2,1675.3 1026.9,1679.7 1182.6,1683.4 1338.3,1676.6 1494.0,1676.6 1649.7,1690.3 1805.4,1693.7 1961.1,1694.9 2116.8,1694.9 2272.5,1695.3 2428.2,1694.0 2583.9,1686.8 2739.6,1670.0 2895.3,1661.9 3051.0,1668.2 3206.7,1677.8" stroke="#ff6a3a" stroke-width="1.3"/><polyline points="248.4,1683.7 404.1,1623.3 559.8,1646.0 715.5,1679.1 871.2,1675.9 1026.9,1691.5 1182.6,1692.8 1338.3,1694.3 1494.0,1692.4 1649.7,1690.3 1805.4,1694.3 1961.1,1694.9 2116.8,1683.4 2272.5,1666.0 2428.2,1661.6 2583.9,1649.5 2739.6,1653.5 2895.3,1638.0 3051.0,1641.1 3206.7,1641.1" stroke="#ffc000" stroke-width="1.3"/><polyline points="248.4,1601.2 404.1,1483.8 559.8,1549.2 715.5,1614.9 871.2,1636.4 1026.9,1655.4 1182.6,1645.1 1338.3,1651.0 1494.0,1661.3 1649.7,1662.6 1805.4,1676.6 1961.1,1673.5 2116.8,1673.1 2272.5,1654.8 2428.2,1652.3 2583.9,1667.8 2739.6,1680.0 2895.3,1684.0 3051.0,1679.7 3206.7,1663.2" stroke="#40e000" stroke-width="1.3"/><polyline points="248.4,1666.9 404.1,1595.3 559.8,1647.0 715.5,1676.3 871.2,1670.0 1026.9,1680.0 1182.6,1685.6 1338.3,1693.7 1494.0,1688.4 1649.7,1682.2 1805.4,1682.8 1961.1,1675.0 2116.8,1675.3 2272.5,1686.5 2428.2,1670.6 2583.9,1674.7 2739.6,1668.5 2895.3,1651.0 3051.0,1642.9 3206.7,1651.0" stroke="#00c878" stroke-width="1.3"/><polyline points="248.4,1635.2 404.1,1564.2 559.8,1587.5 715.5,1638.0 871.2,1640.1 1026.9,1654.8 1182.6,1663.8 1338.3,1666.3 1494.0,1666.6 1649.7,1666.0 1805.4,1660.1 1961.1,1645.4 2116.8,1636.7 2272.5,1650.1 2428.2,1662.9 2583.9,1665.0 2739.6,1654.8 2895.3,1665.7 3051.0,1667.2 3206.7,1658.5" stroke="#20a0a0" stroke-width="1.3"/><polyline points="248.4,1595.0 404.1,1442.7 559.8,1512.8 715.5,1602.5 871.2,1621.1 1026.9,1637.0 1182.6,1631.7 1338.3,1631.4 1494.0,1637.6 1649.7,1639.5 1805.4,1654.5 1961.1,1669.7 2116.8,1672.2 2272.5,1678.7 2428.2,1680.3 2583.9,1659.8 2739.6,1657.3 2895.3,1675.9 3051.0,1661.6 3206.7,1667.5" stroke="#00b8d8" stroke-width="1.3"/><polyline points="248.4,1569.4 404.1,1419.0 559.8,1515.3 715.5,1596.8 871.2,1614.0 1026.9,1634.2 1182.6,1626.4 1338.3,1633.9 1494.0,1633.3 1649.7,1658.5 1805.4,1637.6 1961.1,1633.6 2116.8,1638.3 2272.5,1636.4 2428.2,1656.6 2583.9,1668.5 2739.6,1650.4 2895.3,1668.5 3051.0,1666.3 3206.7,1667.5" stroke="#00bfff" stroke-width="1.3"/><polyline points="248.4,1680.0 404.1,1610.9 559.8,1638.0 715.5,1671.0 871.2,1666.3 1026.9,1683.7 1182.6,1684.0 1338.3,1694.3 1494.0,1688.4 1649.7,1682.5 1805.4,1694.3 1961.1,1686.8 2116.8,1694.9 2272.5,1678.7 2428.2,1690.0 2583.9,1675.9 2739.6,1692.8 2895.3,1694.9 3051.0,1694.3 3206.7,1686.8" stroke="#1e90ff" stroke-width="1.3"/><polyline points="248.4,1587.8 404.1,1448.9 559.8,1496.0 715.5,1597.2 871.2,1613.0 1026.9,1618.3 1182.6,1621.1 1338.3,1627.4 1494.0,1630.5 1649.7,1639.5 1805.4,1636.4 1961.1,1650.4 2116.8,1666.9 2272.5,1666.9 2428.2,1653.5 2583.9,1639.2 2739.6,1639.5 2895.3,1638.0 3051.0,1655.1 3206.7,1668.5" stroke="#4169e1" stroke-width="1.3"/><polyline points="248.4,1656.6 404.1,1598.7 559.8,1651.3 715.5,1674.1 871.2,1678.1 1026.9,1687.8 1182.6,1683.4 1338.3,1677.5 1494.0,1685.9 1649.7,1693.7 1805.4,1694.3 1961.1,1694.9 2116.8,1694.9 2272.5,1695.3 2428.2,1683.1 2583.9,1694.9 2739.6,1694.9 2895.3,1679.4 3051.0,1676.3 3206.7,1686.2" stroke="#9370db" stroke-width="1.3"/><polyline points="248.4,1631.4 404.1,1529.3 559.8,1561.7 715.5,1621.8 871.2,1645.4 1026.9,1655.7 1182.6,1648.2 1338.3,1642.3 1494.0,1634.5 1649.7,1639.5 1805.4,1649.5 1961.1,1649.5 2116.8,1655.4 2272.5,1660.1 2428.2,1669.1 2583.9,1660.4 2739.6,1665.0 2895.3,1675.3 3051.0,1682.8 3206.7,1694.0" stroke="#9400d3" stroke-width="1.3"/><polyline points="248.4,1569.4 404.1,1419.0 559.8,1492.5 715.5,1583.5 871.2,1616.8 1026.9,1638.6 1182.6,1642.0 1338.3,1640.8 1494.0,1652.0 1649.7,1642.9 1805.4,1654.5 1961.1,1645.1 2116.8,1659.1 2272.5,1650.7 2428.2,1639.5 2583.9,1640.8 2739.6,1647.0 2895.3,1651.7 3051.0,1669.1 3206.7,1674.1" stroke="#6b8e23" stroke-width="1.3"/><polyline points="248.4,1614.3 404.1,1502.2 559.8,1545.8 715.5,1616.2 871.2,1634.2 1026.9,1650.7 1182.6,1641.1 1338.3,1655.1 1494.0,1647.0 1649.7,1664.4 1805.4,1647.3 1961.1,1663.5 2116.8,1674.1 2272.5,1657.9 2428.2,1672.2 2583.9,1660.4 2739.6,1649.2 2895.3,1638.0 3051.0,1641.1 3206.7,1641.1" stroke="#a0522d" stroke-width="1.3"/><polyline points="248.4,1596.2 404.1,1464.2 559.8,1527.1 715.5,1600.3 871.2,1627.4 1026.9,1644.8 1182.6,1639.5 1338.3,1652.0 1494.0,1644.5 1649.7,1660.7 1805.4,1678.1 1961.1,1692.8 2116.8,1694.9 2272.5,1692.1 2428.2,1695.3 2583.9,1694.9 2739.6,1694.9 2895.3,1694.9 3051.0,1679.1 3206.7,1681.9" stroke="#6a5acd" stroke-width="1.3"/><polyline points="248.4,1628.0 404.1,1515.3 559.8,1592.5 715.5,1634.5 871.2,1636.7 1026.9,1635.5 1182.6,1644.2 1338.3,1656.3 1494.0,1647.9 1649.7,1649.5 1805.4,1645.7 1961.1,1656.6 2116.8,1660.7 2272.5,1653.5 2428.2,1665.0 2583.9,1650.4 2739.6,1639.5 2895.3,1657.6 3051.0,1677.2 3206.7,1676.9" stroke="#5f9ea0" stroke-width="1.3"/><polyline points="248.4,1569.4 404.1,1419.0 559.8,1507.8 715.5,1590.0 871.2,1610.2 1026.9,1618.3 1182.6,1621.1 1338.3,1627.4 1494.0,1630.5 1649.7,1639.5 1805.4,1644.8 1961.1,1655.1 2116.8,1668.2 2272.5,1680.3 2428.2,1666.6 2583.9,1655.4 2739.6,1671.6 2895.3,1651.0 3051.0,1641.1 3206.7,1641.1" stroke="#fa8072" stroke-width="1.3"/><polyline points="248.4,1630.8 404.1,1520.2 559.8,1550.1 715.5,1617.1 871.2,1647.3 1026.9,1653.8 1182.6,1658.8 1338.3,1662.2 1494.0,1652.9 1649.7,1655.1 1805.4,1644.8 1961.1,1662.6 2116.8,1676.6 2272.5,1685.3 2428.2,1695.3 2583.9,1694.9 2739.6,1694.9 2895.3,1679.1 3051.0,1685.3 3206.7,1694.3" stroke="#ff69b4" stroke-width="1.3"/><polyline points="248.4,1653.8 404.1,1588.1 559.8,1639.2 715.5,1675.3 871.2,1682.5 1026.9,1691.5 1182.6,1690.3 1338.3,1694.3 1494.0,1688.7 1649.7,1693.7 1805.4,1684.4 1961.1,1694.9 2116.8,1692.4 2272.5,1695.3 2428.2,1695.3 2583.9,1691.2 2739.6,1694.9 2895.3,1680.0 3051.0,1667.8 3206.7,1680.3" stroke="#20b2aa" stroke-width="1.3"/><polyline points="248.4,1617.7 404.1,1484.7 559.8,1538.3 715.5,1597.5 871.2,1614.3 1026.9,1626.4 1182.6,1634.8 1338.3,1637.3 1494.0,1647.9 1649.7,1641.4 1805.4,1636.4 1961.1,1633.6 2116.8,1639.5 2272.5,1636.4 2428.2,1639.5 2583.9,1636.4 2739.6,1639.5 2895.3,1638.0 3051.0,1641.1 3206.7,1660.1" stroke="#2e8b57" stroke-width="1.3"/><polyline points="248.4,1576.6 404.1,1419.0 559.8,1492.5 715.5,1578.5 871.2,1605.9 1026.9,1629.5 1182.6,1644.5 1338.3,1645.7 1494.0,1637.0 1649.7,1650.1 1805.4,1649.8 1961.1,1667.2 2116.8,1686.8 2272.5,1685.9 2428.2,1694.3 2583.9,1694.9 2739.6,1694.9 2895.3,1694.9 3051.0,1681.2 3206.7,1667.2" stroke="#4682b4" stroke-width="1.3"/><polyline points="248.4,1642.0 404.1,1547.3 559.8,1579.4 715.5,1634.2 871.2,1640.1 1026.9,1642.0 1182.6,1651.0 1338.3,1649.2 1494.0,1656.9 1649.7,1656.6 1805.4,1656.3 1961.1,1638.9 2116.8,1659.8 2272.5,1642.3 2428.2,1653.8 2583.9,1670.3 2739.6,1666.3 2895.3,1677.2 3051.0,1674.4 3206.7,1680.3" stroke="#d2691e" stroke-width="1.3"/><polyline points="248.4,1645.4 404.1,1541.7 559.8,1581.6 715.5,1647.0 871.2,1658.5 1026.9,1669.1 1182.6,1659.4 1338.3,1671.9 1494.0,1677.8 1649.7,1680.9 1805.4,1672.8 1961.1,1680.6 2116.8,1682.8 2272.5,1672.8 2428.2,1654.8 2583.9,1650.4 2739.6,1660.1 2895.3,1675.3 3051.0,1677.2 3206.7,1684.4" stroke="#bdb76b" stroke-width="1.3"/><polyline points="248.4,1683.7 404.1,1623.3 559.8,1630.8 715.5,1650.4 871.2,1663.5 1026.9,1663.2 1182.6,1654.5 1338.3,1668.2 1494.0,1677.2 1649.7,1671.0 1805.4,1679.4 1961.1,1684.4 2116.8,1681.2 2272.5,1676.3 2428.2,1685.3 2583.9,1694.9 2739.6,1694.9 2895.3,1694.9 3051.0,1683.1 3206.7,1686.5" stroke="#00ced1" stroke-width="1.3"/><polyline points="248.4,1642.9 404.1,1519.3 559.8,1560.7 715.5,1624.9 871.2,1635.2 1026.9,1648.2 1182.6,1653.8 1338.3,1666.6 1494.0,1670.6 1649.7,1680.6 1805.4,1685.9 1961.1,1689.6 2116.8,1674.1 2272.5,1685.6 2428.2,1695.3 2583.9,1687.5 2739.6,1694.9 2895.3,1694.9 3051.0,1694.3 3206.7,1683.4" stroke="#c71585" stroke-width="1.3"/><polyline points="248.4,1613.7 404.1,1466.7 559.8,1514.6 715.5,1579.1 871.2,1612.7 1026.9,1637.0 1182.6,1635.2 1338.3,1637.0 1494.0,1647.6 1649.7,1639.5 1805.4,1639.2 1961.1,1644.8 2116.8,1636.4 2272.5,1636.4 2428.2,1642.6 2583.9,1659.8 2739.6,1651.3 2895.3,1654.1 3051.0,1641.4 3206.7,1641.1" stroke="#8a2be2" stroke-width="1.3"/><polyline points="248.4,1683.7 404.1,1623.3 559.8,1633.9 715.5,1670.3 871.2,1673.1 1026.9,1690.0 1182.6,1684.0 1338.3,1686.2 1494.0,1677.8 1649.7,1678.7 1805.4,1690.0 1961.1,1692.8 2116.8,1694.9 2272.5,1695.3 2428.2,1688.1 2583.9,1682.2 2739.6,1685.9 2895.3,1694.0 3051.0,1694.0 3206.7,1689.0" stroke="#ff4500" stroke-width="1.3"/><polyline points="248.4,1683.7 404.1,1616.5 559.8,1652.0 715.5,1679.1 871.2,1676.6 1026.9,1684.7 1182.6,1687.2 1338.3,1691.8 1494.0,1686.2 1649.7,1690.3 1805.4,1689.0 1961.1,1694.9 2116.8,1694.9 2272.5,1693.7 2428.2,1695.3 2583.9,1694.9 2739.6,1685.6 2895.3,1694.6 3051.0,1694.3 3206.7,1683.4" stroke="#32cd32" stroke-width="1.3"/><polyline points="248.4,1573.8 404.1,1419.0 559.8,1510.0 715.5,1598.1 871.2,1613.7 1026.9,1625.8 1182.6,1626.4 1338.3,1635.8 1494.0,1633.9 1649.7,1641.4 1805.4,1636.4 1961.1,1633.6 2116.8,1654.1 2272.5,1637.0 2428.2,1644.8 2583.9,1636.4 2739.6,1642.3 2895.3,1648.9 3051.0,1641.1 3206.7,1641.1" stroke="#00fa9a" stroke-width="1.3"/><polyline points="248.4,1615.2 404.1,1506.5 559.8,1545.8 715.5,1600.9 871.2,1609.6 1026.9,1622.1 1182.6,1636.4 1338.3,1630.8 1494.0,1630.5 1649.7,1639.5 1805.4,1638.0 1961.1,1637.3 2116.8,1636.4 2272.5,1648.5 2428.2,1665.0 2583.9,1643.2 2739.6,1661.6 2895.3,1647.3 3051.0,1641.7 3206.7,1641.1" stroke="#b03060" stroke-width="1.3"/><polyline points="248.4,1642.9 404.1,1578.2 559.8,1602.5 715.5,1663.8 871.2,1679.1 1026.9,1686.8 1182.6,1692.8 1338.3,1690.6 1494.0,1681.2 1649.7,1679.4 1805.4,1677.8 1961.1,1680.0 2116.8,1670.6 2272.5,1685.9 2428.2,1692.8 2583.9,1676.6 2739.6,1688.1 2895.3,1694.9 3051.0,1685.9 3206.7,1694.3" stroke="#ffa07a" stroke-width="1.3"/><polyline points="248.4,1617.4 404.1,1468.2 559.8,1543.9 715.5,1617.4 871.2,1626.1 1026.9,1644.5 1182.6,1646.4 1338.3,1649.5 1494.0,1661.6 1649.7,1669.7 1805.4,1662.9 1961.1,1679.7 2116.8,1691.2 2272.5,1677.8 2428.2,1673.5 2583.9,1687.5 2739.6,1694.9 2895.3,1694.9 3051.0,1694.3 3206.7,1694.3" stroke="#48d1cc" stroke-width="1.3"/><polyline points="248.4,1507.5 404.1,1277.0 559.8,1209.5 715.5,1498.1 871.2,1519.0 1026.9,1566.6 1182.6,1603.7 1338.3,1537.7 1494.0,1565.1 1649.7,1602.1 1805.4,1494.1 1961.1,1263.3 2116.8,1136.0 2272.5,1406.9 2428.2,1460.8 2583.9,1428.7 2739.6,1533.6 2895.3,1573.2 3051.0,1591.9 3206.7,1595.9" stroke="#4ba3aa" stroke-width="1.6"/><polyline points="248.4,1370.5 404.1,1277.0 559.8,1331.2 715.5,1498.1 871.2,1551.4 1026.9,1585.9 1182.6,1603.7 1338.3,1612.4 1494.0,1614.9 1649.7,1627.4 1805.4,1637.6 1961.1,1619.0 2116.8,1615.5 2272.5,1591.9 2428.2,1624.9 2583.9,1633.6 2739.6,1638.3 2895.3,1641.4 3051.0,1647.6 3206.7,1650.7" stroke="#d8a038" stroke-width="1.6"/><polyline points="248.4,1619.6 404.1,1495.0 559.8,1572.9 715.5,1632.0 871.2,1647.6 1026.9,1656.9 1182.6,1660.1 1338.3,1663.2 1494.0,1660.1 1649.7,1650.7 1805.4,1627.1 1961.1,1465.1 2116.8,1326.6 2272.5,1398.5 2428.2,1537.7 2583.9,1515.6 2739.6,1558.5 2895.3,1587.5 3051.0,1616.8 3206.7,1567.0" stroke="#ecc49e" stroke-width="1.5"/><polyline points="248.4,1641.4 404.1,1432.7 559.8,1414.1 715.5,1540.5 871.2,1582.2 1026.9,1610.2 1182.6,1619.6 1338.3,1625.8 1494.0,1632.0 1649.7,1639.8 1805.4,1639.8 1961.1,1514.0 2116.8,1587.5 2272.5,1600.0 2428.2,1585.3 2583.9,1639.5 2739.6,1624.9 2895.3,1556.4 3051.0,1462.9 3206.7,1616.8" stroke="#fbf0d8" stroke-width="1.5"/><polyline points="248.4,1632.0 404.1,1371.1 559.8,1439.0 715.5,1551.1 871.2,1594.7 1026.9,1619.6 1182.6,1628.9 1338.3,1635.2 1494.0,1641.4 1649.7,1647.6 1805.4,1653.8 1961.1,1650.7 2116.8,1647.6 2272.5,1652.3 2428.2,1649.2 2583.9,1653.8 2739.6,1656.9 2895.3,1660.1 3051.0,1656.9 3206.7,1658.5" stroke="#b8b8b8" stroke-width="1.5"/><polyline points="248.4,1596.8 404.1,1390.4 559.8,1443.0 715.5,1579.1 871.2,1597.8 1026.9,1612.4 1182.6,1622.4 1338.3,1627.4 1494.0,1626.1 1649.7,1604.9 1805.4,1570.1 1961.1,1624.9 2116.8,1635.5 2272.5,1643.9 2428.2,1631.1 2583.9,1628.9 2739.6,1623.6 2895.3,1623.6 3051.0,1631.7 3206.7,1634.5" stroke="#2a2af0" stroke-width="1.9"/><polyline points="248.4,1600.0 404.1,1337.5 559.8,1437.7 715.5,1562.0 871.2,1620.2 1026.9,1645.1 1182.6,1641.1 1338.3,1600.9 1494.0,1629.9 1649.7,1645.1 1805.4,1650.7 1961.1,1652.3 2116.8,1649.2 2272.5,1650.7 2428.2,1650.1 2583.9,1650.1 2739.6,1650.7 2895.3,1650.1 3051.0,1650.7 3206.7,1650.1" stroke="#303434" stroke-width="1.8"/><polyline points="248.4,1494.1 404.1,1337.5 559.8,1495.0 715.5,1582.2 871.2,1583.1 1026.9,1615.2 1182.6,1619.6 1338.3,1625.2 1494.0,1632.0 1649.7,1641.4 1805.4,1646.0 1961.1,1649.2 2116.8,1652.3 2272.5,1650.7 2428.2,1653.8 2583.9,1652.3 2739.6,1650.7 2895.3,1653.8 3051.0,1655.4 3206.7,1653.8" stroke="#4a6c6c" stroke-width="1.6"/><polyline points="248.4,1522.1 404.1,1350.5 559.8,1513.7 715.5,1587.2 871.2,1608.1 1026.9,1617.7 1182.6,1622.7 1338.3,1628.9 1494.0,1635.2 1649.7,1642.9 1805.4,1647.6 1961.1,1646.0 2116.8,1650.7 2272.5,1649.2 2428.2,1652.3 2583.9,1650.7 2739.6,1653.8 2895.3,1655.4 3051.0,1656.9 3206.7,1655.4" stroke="#a83232" stroke-width="1.6"/><polyline points="248.4,1490.0 404.1,1403.5 559.8,1488.8 715.5,1576.6 871.2,1608.1 1026.9,1625.8 1182.6,1630.5 1338.3,1635.2 1494.0,1638.3 1649.7,1644.5 1805.4,1649.2 1961.1,1620.8 2116.8,1639.5 2272.5,1547.3 2428.2,1581.3 2583.9,1612.4 2739.6,1624.9 2895.3,1635.5 3051.0,1647.9 3206.7,1645.7" stroke="#12a040" stroke-width="1.6"/><polyline points="248.4,1537.1 404.1,1337.5 559.8,1445.2 715.5,1569.8 871.2,1610.2 1026.9,1622.7 1182.6,1628.9 1338.3,1633.6 1494.0,1636.7 1649.7,1642.9 1805.4,1646.0 1961.1,1650.7 2116.8,1641.7 2272.5,1589.7 2428.2,1656.0 2583.9,1650.7 2739.6,1653.8 2895.3,1655.4 3051.0,1658.5 3206.7,1656.9" stroke="#108030" stroke-width="1.6"/><polyline points="248.4,1610.2 404.1,1558.9 559.8,1600.9 715.5,1652.0 871.2,1656.9 1026.9,1663.2 1182.6,1666.3 1338.3,1669.4 1494.0,1671.0 1649.7,1685.3 1805.4,1624.9 1961.1,1664.4 2116.8,1660.4 2272.5,1624.9 2428.2,1446.1 2583.9,1628.0 2739.6,1654.1 2895.3,1648.9 3051.0,1660.1 3206.7,1664.4" stroke="#ff30ff" stroke-width="1.7"/><polyline points="248.4,1635.2 404.1,1453.0 559.8,1551.1 715.5,1619.6 871.2,1638.3 1026.9,1647.6 1182.6,1650.7 1338.3,1653.8 1494.0,1656.9 1649.7,1666.3 1805.4,1669.4 1961.1,1672.5 2116.8,1666.3 2272.5,1664.4 2428.2,1558.5 2583.9,1614.6 2739.6,1635.2 2895.3,1644.5 3051.0,1650.7 3206.7,1656.9" stroke="#c050d8" stroke-width="1.5"/><polyline points="248.4,1700.2 404.1,1589.1 559.8,1539.9 715.5,1631.4 871.2,1644.5 1026.9,1653.8 1182.6,1660.1 1338.3,1666.3 1494.0,1669.4 1649.7,1666.3 1805.4,1669.4 1961.1,1612.4 2116.8,1650.7 2272.5,1666.3 2428.2,1670.6 2583.9,1485.1 2739.6,1531.5 2895.3,1550.1 3051.0,1618.6 3206.7,1627.1" stroke="#ffd000" stroke-width="1.7"/><polyline points="248.4,1663.2 404.1,1538.6 559.8,1563.5 715.5,1619.6 871.2,1635.2 1026.9,1644.5 1182.6,1647.6 1338.3,1650.7 1494.0,1653.8 1649.7,1656.9 1805.4,1660.1 1961.1,1639.5 2116.8,1628.9 2272.5,1656.0 2428.2,1631.1 2583.9,1633.3 2739.6,1650.7 2895.3,1668.5 3051.0,1658.2 3206.7,1626.1" stroke="#e0204a" stroke-width="1.6"/><polyline points="248.4,1656.9 404.1,1563.5 559.8,1582.2 715.5,1625.8 871.2,1638.3 1026.9,1647.6 1182.6,1653.8 1338.3,1656.9 1494.0,1660.1 1649.7,1663.2 1805.4,1666.3 1961.1,1663.2 2116.8,1656.9 2272.5,1660.1 2428.2,1633.3 2583.9,1587.5 2739.6,1624.9 2895.3,1635.5 3051.0,1656.0 3206.7,1654.1" stroke="#a02090" stroke-width="1.5"/><polyline points="248.4,1638.3 404.1,1585.6 559.8,1597.5 715.5,1660.1 871.2,1673.1 1026.9,1678.7 1182.6,1681.9 1338.3,1683.4 1494.0,1685.0 1649.7,1686.5 1805.4,1693.7 1961.1,1694.3 2116.8,1694.9 2272.5,1695.9 2428.2,1696.5 2583.9,1689.6 2739.6,1691.2 2895.3,1691.8 3051.0,1690.6 3206.7,1691.2" stroke="#00e4f0" stroke-width="2.2"/><polyline points="248.4,1619.6 404.1,1463.9 559.8,1423.4 715.5,1594.7 871.2,1622.7 1026.9,1632.0 1182.6,1638.3 1338.3,1644.5 1494.0,1647.6 1649.7,1653.8 1805.4,1656.9 1961.1,1660.1 2116.8,1661.6 2272.5,1663.2 2428.2,1664.7 2583.9,1666.3 2739.6,1663.2 2895.3,1666.3 3051.0,1667.8 3206.7,1666.3" stroke="#70a0f0" stroke-width="1.6"/><polyline points="248.4,1632.0 404.1,1501.2 559.8,1437.7 715.5,1615.8 871.2,1631.4 1026.9,1638.3 1182.6,1644.5 1338.3,1647.6 1494.0,1650.7 1649.7,1653.8 1805.4,1658.5 1961.1,1661.6 2116.8,1663.2 2272.5,1660.1 2428.2,1661.6 2583.9,1663.2 2739.6,1664.7 2895.3,1666.3 3051.0,1663.2 3206.7,1664.7" stroke="#00d0ff" stroke-width="1.6"/><polyline points="248.4,1553.9 404.1,1469.5 559.8,1469.5 715.5,1622.7 871.2,1641.4 1026.9,1650.7 1182.6,1653.8 1338.3,1660.1 1494.0,1663.2 1649.7,1666.3 1805.4,1669.4 1961.1,1672.5 2116.8,1675.6 2272.5,1678.7 2428.2,1681.9 2583.9,1678.7 2739.6,1681.9 2895.3,1683.4 3051.0,1685.0 3206.7,1681.9" stroke="#ff7040" stroke-width="1.6"/><polyline points="248.4,1650.7 404.1,1544.8 559.8,1562.6 715.5,1637.6 871.2,1650.7 1026.9,1656.9 1182.6,1660.1 1338.3,1663.2 1494.0,1666.3 1649.7,1669.4 1805.4,1672.5 1961.1,1675.6 2116.8,1669.4 2272.5,1672.5 2428.2,1675.6 2583.9,1678.7 2739.6,1675.6 2895.3,1678.7 3051.0,1681.9 3206.7,1678.7" stroke="#b02838" stroke-width="1.6"/><polyline points="248.4,1666.3 404.1,1503.7 559.8,1519.3 715.5,1608.1 871.2,1631.4 1026.9,1641.4 1182.6,1646.0 1338.3,1650.7 1494.0,1653.8 1649.7,1658.5 1805.4,1661.6 1961.1,1666.3 2116.8,1669.4 2272.5,1671.0 2428.2,1672.5 2583.9,1674.1 2739.6,1675.6 2895.3,1677.2 3051.0,1678.7 3206.7,1675.6" stroke="#2020a0" stroke-width="1.6"/><polyline points="248.4,1675.0 404.1,1598.7 559.8,1619.6 715.5,1664.1 871.2,1669.4 1026.9,1672.5 1182.6,1675.6 1338.3,1678.7 1494.0,1680.3 1649.7,1681.9 1805.4,1683.4 1961.1,1685.0 2116.8,1686.5 2272.5,1688.1 2428.2,1688.7 2583.9,1689.6 2739.6,1688.1 2895.3,1686.5 3051.0,1685.0 3206.7,1686.5" stroke="#504a90" stroke-width="1.8"/><polyline points="248.4,1672.5 404.1,1618.6 559.8,1623.9 715.5,1669.1 871.2,1675.6 1026.9,1678.7 1182.6,1681.9 1338.3,1683.4 1494.0,1684.4 1649.7,1685.0 1805.4,1685.6 1961.1,1686.5 2116.8,1688.1 2272.5,1689.6 2428.2,1691.2 2583.9,1690.6 2739.6,1689.6 2895.3,1691.2 3051.0,1691.8 3206.7,1691.2" stroke="#e89a10" stroke-width="1.6"/><polyline points="248.4,1678.7 404.1,1620.8 559.8,1635.2 715.5,1678.4 871.2,1682.2 1026.9,1686.5 1182.6,1688.1 1338.3,1691.2 1494.0,1689.6 1649.7,1691.2 1805.4,1695.9 1961.1,1697.4 2116.8,1698.4 2272.5,1707.7 2428.2,1694.3 2583.9,1693.7 2739.6,1694.9 2895.3,1695.9 3051.0,1694.3 3206.7,1694.9" stroke="#ff8060" stroke-width="1.5"/></g><path d="M248.4 1113.6 H3206.7 V1729.8" stroke="#000" stroke-width="2.2" fill="none"/><path d="M248.4 1113.6 V1729.8 H3206.7" stroke="#3c3c3c" stroke-width="2.6" fill="none"/><path d="M250.4 1114.6 V1727.8 H3206.7" stroke="#d8d8d8" stroke-width="1" fill="none" opacity="0.7"/><path d="M1649.70 1113.6 V1729.8" stroke="#000" stroke-width="2.2"/></svg><div class="t" style="left:31.5px;width:200px;text-align:right;top:1703.4px;font-size:19.5px;letter-spacing:0.3px;color:#000;">0</div><div class="t" style="left:31.5px;width:200px;text-align:right;top:1672.3px;font-size:19.5px;letter-spacing:0.3px;color:#000;">100</div><div class="t" style="left:31.5px;width:200px;text-align:right;top:1641.1px;font-size:19.5px;letter-spacing:0.3px;color:#000;">200</div><div class="t" style="left:31.5px;width:200px;text-align:right;top:1610.0px;font-size:19.5px;letter-spacing:0.3px;color:#000;">300</div><div class="t" style="left:31.5px;width:200px;text-align:right;top:1578.8px;font-size:19.5px;letter-spacing:0.3px;color:#000;">400</div><div class="t" style="left:31.5px;width:200px;text-align:right;top:1547.7px;font-size:19.5px;letter-spacing:0.3px;color:#000;">500</div><div class="t" style="left:31.5px;width:200px;text-align:right;top:1516.6px;font-size:19.5px;letter-spacing:0.3px;color:#000;">600</div><div class="t" style="left:31.5px;width:200px;text-align:right;top:1485.4px;font-size:19.5px;letter-spacing:0.3px;color:#000;">700</div><div class="t" style="left:31.5px;width:200px;text-align:right;top:1454.3px;font-size:19.5px;letter-spacing:0.3px;color:#000;">800</div><div class="t" style="left:31.5px;width:200px;text-align:right;top:1423.1px;font-size:19.5px;letter-spacing:0.3px;color:#000;">900</div><div class="t" style="left:31.5px;width:200px;text-align:right;top:1392.0px;font-size:19.5px;letter-spacing:0.3px;color:#000;">1.000</div><div class="t" style="left:31.5px;width:200px;text-align:right;top:1360.9px;font-size:19.5px;letter-spacing:0.3px;color:#000;">1.100</div><div class="t" style="left:31.5px;width:200px;text-align:right;top:1329.7px;font-size:19.5px;letter-spacing:0.3px;color:#000;">1.200</div><div class="t" style="left:31.5px;width:200px;text-align:right;top:1298.6px;font-size:19.5px;letter-spacing:0.3px;color:#000;">1.300</div><div class="t" style="left:31.5px;width:200px;text-align:right;top:1267.4px;font-size:19.5px;letter-spacing:0.3px;color:#000;">1.400</div><div class="t" style="left:31.5px;width:200px;text-align:right;top:1236.3px;font-size:19.5px;letter-spacing:0.3px;color:#000;">1.500</div><div class="t" style="left:31.5px;width:200px;text-align:right;top:1205.2px;font-size:19.5px;letter-spacing:0.3px;color:#000;">1.600</div><div class="t" style="left:31.5px;width:200px;text-align:right;top:1174.0px;font-size:19.5px;letter-spacing:0.3px;color:#000;">1.700</div><div class="t" style="left:31.5px;width:200px;text-align:right;top:1142.9px;font-size:19.5px;letter-spacing:0.3px;color:#000;">1.800</div><div class="t" style="left:31.5px;width:200px;text-align:right;top:1111.7px;font-size:19.5px;letter-spacing:0.3px;color:#000;">1.900</div><div class="t" style="left:199.4px;width:100px;text-align:center;top:1742.3px;font-size:19.5px;line-height:23.6px;letter-spacing:1.0px;text-indent:1px;color:#000;">06/09<br>2022</div><div class="t" style="left:277.2px;width:100px;text-align:center;top:1742.3px;font-size:19.5px;line-height:23.6px;letter-spacing:1.0px;text-indent:1px;color:#000;">06/09<br>2022</div><div class="t" style="left:355.1px;width:100px;text-align:center;top:1742.3px;font-size:19.5px;line-height:23.6px;letter-spacing:1.0px;text-indent:1px;color:#000;">07/09<br>2022</div><div class="t" style="left:432.9px;width:100px;text-align:center;top:1742.3px;font-size:19.5px;line-height:23.6px;letter-spacing:1.0px;text-indent:1px;color:#000;">07/09<br>2022</div><div class="t" style="left:510.8px;width:100px;text-align:center;top:1742.3px;font-size:19.5px;line-height:23.6px;letter-spacing:1.0px;text-indent:1px;color:#000;">08/09<br>2022</div><div class="t" style="left:588.6px;width:100px;text-align:center;top:1742.3px;font-size:19.5px;line-height:23.6px;letter-spacing:1.0px;text-indent:1px;color:#000;">08/09<br>2022</div><div class="t" style="left:666.5px;width:100px;text-align:center;top:1742.3px;font-size:19.5px;line-height:23.6px;letter-spacing:1.0px;text-indent:1px;color:#000;">09/09<br>2022</div><div class="t" style="left:744.3px;width:100px;text-align:center;top:1742.3px;font-size:19.5px;line-height:23.6px;letter-spacing:1.0px;text-indent:1px;color:#000;">09/09<br>2022</div><div class="t" style="left:822.2px;width:100px;text-align:center;top:1742.3px;font-size:19.5px;line-height:23.6px;letter-spacing:1.0px;text-indent:1px;color:#000;">10/09<br>2022</div><div class="t" style="left:900.0px;width:100px;text-align:center;top:1742.3px;font-size:19.5px;line-height:23.6px;letter-spacing:1.0px;text-indent:1px;color:#000;">10/09<br>2022</div><div class="t" style="left:977.9px;width:100px;text-align:center;top:1742.3px;font-size:19.5px;line-height:23.6px;letter-spacing:1.0px;text-indent:1px;color:#000;">11/09<br>2022</div><div class="t" style="left:1055.8px;width:100px;text-align:center;top:1742.3px;font-size:19.5px;line-height:23.6px;letter-spacing:1.0px;text-indent:1px;color:#000;">11/09<br>2022</div><div class="t" style="left:1133.6px;width:100px;text-align:center;top:1742.3px;font-size:19.5px;line-height:23.6px;letter-spacing:1.0px;text-indent:1px;color:#000;">12/09<br>2022</div><div class="t" style="left:1211.5px;width:100px;text-align:center;top:1742.3px;font-size:19.5px;line-height:23.6px;letter-spacing:1.0px;text-indent:1px;color:#000;">12/09<br>2022</div><div class="t" style="left:1289.3px;width:100px;text-align:center;top:1742.3px;font-size:19.5px;line-height:23.6px;letter-spacing:1.0px;text-indent:1px;color:#000;">13/09<br>2022</div><div class="t" style="left:1367.2px;width:100px;text-align:center;top:1742.3px;font-size:19.5px;line-height:23.6px;letter-spacing:1.0px;text-indent:1px;color:#000;">13/09<br>2022</div><div class="t" style="left:1445.0px;width:100px;text-align:center;top:1742.3px;font-size:19.5px;line-height:23.6px;letter-spacing:1.0px;text-indent:1px;color:#000;">14/09<br>2022</div><div class="t" style="left:1522.8px;width:100px;text-align:center;top:1742.3px;font-size:19.5px;line-height:23.6px;letter-spacing:1.0px;text-indent:1px;color:#000;">14/09<br>2022</div><div class="t" style="left:1600.7px;width:100px;text-align:center;top:1742.3px;font-size:19.5px;line-height:23.6px;letter-spacing:1.0px;text-indent:1px;color:#000;">15/09<br>2022</div><div class="t" style="left:1678.5px;width:100px;text-align:center;top:1742.3px;font-size:19.5px;line-height:23.6px;letter-spacing:1.0px;text-indent:1px;color:#000;">15/09<br>2022</div><div class="t" style="left:1756.4px;width:100px;text-align:center;top:1742.3px;font-size:19.5px;line-height:23.6px;letter-spacing:1.0px;text-indent:1px;color:#000;">16/09<br>2022</div><div class="t" style="left:1834.2px;width:100px;text-align:center;top:1742.3px;font-size:19.5px;line-height:23.6px;letter-spacing:1.0px;text-indent:1px;color:#000;">16/09<br>2022</div><div class="t" style="left:1912.1px;width:100px;text-align:center;top:1742.3px;font-size:19.5px;line-height:23.6px;letter-spacing:1.0px;text-indent:1px;color:#000;">17/09<br>2022</div><div class="t" style="left:1990.0px;width:100px;text-align:center;top:1742.3px;font-size:19.5px;line-height:23.6px;letter-spacing:1.0px;text-indent:1px;color:#000;">17/09<br>2022</div><div class="t" style="left:2067.8px;width:100px;text-align:center;top:1742.3px;font-size:19.5px;line-height:23.6px;letter-spacing:1.0px;text-indent:1px;color:#000;">18/09<br>2022</div><div class="t" style="left:2145.6px;width:100px;text-align:center;top:1742.3px;font-size:19.5px;line-height:23.6px;letter-spacing:1.0px;text-indent:1px;color:#000;">18/09<br>2022</div><div class="t" style="left:2223.5px;width:100px;text-align:center;top:1742.3px;font-size:19.5px;line-height:23.6px;letter-spacing:1.0px;text-indent:1px;color:#000;">19/09<br>2022</div><div class="t" style="left:2301.3px;width:100px;text-align:center;top:1742.3px;font-size:19.5px;line-height:23.6px;letter-spacing:1.0px;text-indent:1px;color:#000;">19/09<br>2022</div><div class="t" style="left:2379.2px;width:100px;text-align:center;top:1742.3px;font-size:19.5px;line-height:23.6px;letter-spacing:1.0px;text-indent:1px;color:#000;">20/09<br>2022</div><div class="t" style="left:2457.0px;width:100px;text-align:center;top:1742.3px;font-size:19.5px;line-height:23.6px;letter-spacing:1.0px;text-indent:1px;color:#000;">20/09<br>2022</div><div class="t" style="left:2534.9px;width:100px;text-align:center;top:1742.3px;font-size:19.5px;line-height:23.6px;letter-spacing:1.0px;text-indent:1px;color:#000;">21/09<br>2022</div><div class="t" style="left:2612.8px;width:100px;text-align:center;top:1742.3px;font-size:19.5px;line-height:23.6px;letter-spacing:1.0px;text-indent:1px;color:#000;">21/09<br>2022</div><div class="t" style="left:2690.6px;width:100px;text-align:center;top:1742.3px;font-size:19.5px;line-height:23.6px;letter-spacing:1.0px;text-indent:1px;color:#000;">22/09<br>2022</div><div class="t" style="left:2768.4px;width:100px;text-align:center;top:1742.3px;font-size:19.5px;line-height:23.6px;letter-spacing:1.0px;text-indent:1px;color:#000;">22/09<br>2022</div><div class="t" style="left:2846.3px;width:100px;text-align:center;top:1742.3px;font-size:19.5px;line-height:23.6px;letter-spacing:1.0px;text-indent:1px;color:#000;">23/09<br>2022</div><div class="t" style="left:2924.2px;width:100px;text-align:center;top:1742.3px;font-size:19.5px;line-height:23.6px;letter-spacing:1.0px;text-indent:1px;color:#000;">23/09<br>2022</div><div class="t" style="left:3002.0px;width:100px;text-align:center;top:1742.3px;font-size:19.5px;line-height:23.6px;letter-spacing:1.0px;text-indent:1px;color:#000;">24/09<br>2022</div><div class="t" style="left:3079.8px;width:100px;text-align:center;top:1742.3px;font-size:19.5px;line-height:23.6px;letter-spacing:1.0px;text-indent:1px;color:#000;">24/09<br>2022</div><div class="t" style="left:3157.7px;width:100px;text-align:center;top:1742.3px;font-size:19.5px;line-height:23.6px;letter-spacing:1.0px;text-indent:1px;color:#000;">25/09<br>2022</div><div class="t" style="left:55px;width:200px;text-align:center;top:1408px;font-size:19px;letter-spacing:1.5px;color:#000;transform:rotate(-90deg);">Portata (m3/sec)</div><div class="t" style="left:1360.9px;width:600px;text-align:center;top:1074.4px;font-size:22px;font-weight:bold;letter-spacing:2.28px;color:#ababab;-webkit-text-stroke:0.5px #ababab;">Serie Nearest Neighbor</div><div class="a" style="left:39px;top:1794px;width:3270px;height:69px;background:linear-gradient(90deg,#0c2b33 0%,#072a33 55%,#0b262c 82%,#101d21 100%);"></div><div class="a" style="left:121.5px;top:1794px;width:585px;height:67px;background:#f1f1f1;border-bottom:2px solid #c9c9c9;"></div><div class="t" style="left:190.5px;top:1815.5px;font-size:25px;color:#303538;">Scrivi qui per eseguire la ricerca</div><div class="a" style="left:1826.8px;top:1794px;width:82px;height:69px;background:#3b4e54;"></div><svg class="a" style="left:0;top:0" width="3339" height="1899" viewBox="0 0 3339 1899"><defs>
<linearGradient id="xlg" x1="0" y1="0" x2="0" y2="1"><stop offset="0" stop-color="#21c46a"/><stop offset="1" stop-color="#0b6e38"/></linearGradient>
<linearGradient id="edg" x1="0" y1="0" x2="1" y2="1"><stop offset="0" stop-color="#35c1f1"/><stop offset="0.5" stop-color="#1b8ce0"/><stop offset="1" stop-color="#0d4fa0"/></linearGradient>
<linearGradient id="edg2" x1="0" y1="0" x2="1" y2="0"><stop offset="0" stop-color="#38d07a"/><stop offset="1" stop-color="#7fe060"/></linearGradient>
<linearGradient id="mlg" x1="0" y1="0" x2="0" y2="1"><stop offset="0" stop-color="#2aa8ee"/><stop offset="1" stop-color="#0a78d0"/></linearGradient>
<linearGradient id="wdg" x1="0" y1="0" x2="0" y2="1"><stop offset="0" stop-color="#4aa0ff"/><stop offset="1" stop-color="#1044a8"/></linearGradient>
<linearGradient id="olg" x1="0" y1="0" x2="0" y2="1"><stop offset="0" stop-color="#30d0ff"/><stop offset="1" stop-color="#0868c8"/></linearGradient>
<linearGradient id="pdg1" x1="0" y1="0" x2="0" y2="1"><stop offset="0" stop-color="#ffd040"/><stop offset="1" stop-color="#f08c00"/></linearGradient>
<linearGradient id="pdg2" x1="0" y1="0" x2="0" y2="1"><stop offset="0" stop-color="#80c8ff"/><stop offset="1" stop-color="#1a60d8"/></linearGradient>
<linearGradient id="pdg3" x1="0" y1="0" x2="0" y2="1"><stop offset="0" stop-color="#ff8080"/><stop offset="1" stop-color="#d81010"/></linearGradient>
</defs><path d="M67 1815.5 L79.5 1813.8 V1826.5 H67 Z M81.5 1813.5 L95.5 1811.5 V1826.5 H81.5 Z M67 1828.5 H79.5 V1841.2 L67 1839.5 Z M81.5 1828.5 H95.5 V1843.5 L81.5 1841.5 Z" fill="#fff"/><circle cx="158.5" cy="1823.5" r="9.3" fill="none" stroke="#222" stroke-width="2"/><path d="M151.8 1830.2 L142 1840" stroke="#222" stroke-width="2.2" stroke-linecap="round"/><path d="M579.3 1847.2 L580.9 1827.5 L584.8 1818.8 L600.6 1809 L619.2 1805.7 L633.4 1811.7 L631.2 1824.2 L621.9 1840.6 L608.3 1842.8 L603.9 1850.5 L583.1 1850.5 Z" fill="#f0102a"/><path d="M583 1841 L596 1839 L607 1832 L616 1822 L622 1809" stroke="#ffb000" stroke-width="1.6" fill="none"/><path d="M583 1846 L600 1844 L611 1836 L620 1824 L627 1810" stroke="#30c040" stroke-width="1.4" fill="none"/><path d="M580 1828 L583 1846" stroke="#d0a020" stroke-width="1.5"/><circle cx="580.4" cy="1805.7" r="3.3" fill="#ffb400"/><path d="M627.4 1840.5 L629 1845.6 L634 1847.2 L629 1848.8 L627.4 1854 L625.8 1848.8 L620.8 1847.2 L625.8 1845.6 Z" fill="#ff80ff"/><path d="M640.5 1836.3 L642.7 1812.2 L650.9 1810 L659.7 1811.7 L663 1807.8 L675.5 1813.9 L682.1 1830.8 L695.8 1837.4 L696.3 1845 L679.3 1850.5 L670 1852.7 L663 1847.2 L657.5 1840.6 L649.3 1842.8 L644.9 1843.4 Z" fill="#0a9a20"/><path d="M644 1840 Q640 1814 651 1811 Q660 1810 661 1830 Q663 1845 671 1851 M666 1848 Q670 1838 680 1840 Q692 1842 696 1845" stroke="#ffd000" stroke-width="2" fill="none"/><path d="M665 1819 L667 1833 Q675 1832 690 1840" stroke="#10e8f8" stroke-width="2.4" fill="none"/><circle cx="680.4" cy="1809" r="4.6" fill="#ffb000"/><circle cx="691.4" cy="1812.8" r="6.5" fill="#ffb000"/><circle cx="698" cy="1827.5" r="3" fill="#20d0f0"/><circle cx="747.4" cy="1827" r="12" fill="none" stroke="#fff" stroke-width="3"/><path d="M816 1815 H836 M816 1840 H836 M820 1819 H832 V1836 H820 Z M840 1815 V1840" stroke="#fff" stroke-width="1.8" fill="none"/><rect x="838.5" y="1821" width="4" height="5" fill="#fff"/><path d="M881.8 1814 V1842 M886.8 1814 V1842" stroke="#556a70" stroke-width="1.2"/><rect x="940" y="1809" width="31.5" height="36.5" rx="2" fill="url(#xlg)"/><path d="M940 1821 H971.5 M940 1833 H971.5 M955 1809 V1845.5" stroke="#0a5a30" stroke-width="0.8" opacity="0.6"/><rect x="929.5" y="1816" width="20.5" height="21.5" rx="1.5" fill="#0f7b3e"/><text x="939.7" y="1833.5" font-family="Liberation Sans" font-weight="bold" font-size="16" fill="#fff" text-anchor="middle">X</text><circle cx="1033.5" cy="1828" r="20" fill="url(#edg)"/><path d="M1015 1822 Q1022 1806 1040 1808 Q1055 1812 1053.5 1830 Q1045 1834 1035 1832 Q1030 1822 1040 1818 Q1030 1812 1020 1818 Z" fill="url(#edg2)"/><path d="M1024 1834 Q1026 1844 1038 1846 Q1048 1846 1053 1838 Q1040 1842 1034 1836 Z" fill="#0a3f88"/><path d="M1098 1812 H1112 L1115 1816 H1136 V1843 H1098 Z" fill="#f0b429"/><path d="M1098 1818 H1136 V1843 H1098 Z" fill="#ffd45a"/><rect x="1107" y="1830" width="20" height="13" fill="#1c7ce0"/><rect x="1112" y="1835" width="10" height="6" fill="#ffd45a"/><path d="M1179.5 1820 L1200.3 1808.7 L1221.2 1820 V1846.8 H1179.5 Z" fill="url(#mlg)"/><path d="M1181 1820 L1200.3 1832 L1219.7 1820 L1200.3 1815 Z" fill="#ffffff"/><path d="M1179.5 1846.8 L1200.3 1830 L1221.2 1846.8 Z" fill="#22b4f4" opacity="0.8"/><circle cx="1283.7" cy="1827" r="19.2" fill="#db4437"/><path d="M1283.7 1827 L1300.3 1836.6 A19.2 19.2 0 0 1 1274.1 1843.6 Z" fill="#0f9d58"/><path d="M1283.7 1827 L1274.1 1843.6 A19.2 19.2 0 0 1 1267.1 1817.4 Z" fill="#0f9d58"/><path d="M1283.7 1827 L1302.9 1827 A19.2 19.2 0 0 1 1283.7 1846.2 Z" fill="#f4c20d"/><path d="M1283.7 1827 L1283.7 1807.8 A19.2 19.2 0 0 1 1302.9 1827Z" fill="#f4c20d" opacity="0.0"/><circle cx="1283.7" cy="1827" r="8.8" fill="#fff"/><circle cx="1283.7" cy="1827" r="6.8" fill="#4285f4"/><rect x="1356" y="1809" width="33" height="36.5" rx="2" fill="url(#wdg)"/><rect x="1346" y="1816" width="20.5" height="21.5" rx="1.5" fill="#1a4fb0"/><text x="1356.2" y="1833.5" font-family="Liberation Sans" font-weight="bold" font-size="15" fill="#fff" text-anchor="middle">W</text><rect x="1440" y="1809" width="32" height="36.5" rx="2" fill="url(#olg)"/><path d="M1440 1830 L1456 1845.5 L1472 1830 V1845.5 H1440Z" fill="#0a74d8"/><rect x="1430" y="1816" width="20.5" height="21.5" rx="1.5" fill="#0a64c8"/><text x="1440.2" y="1833.5" font-family="Liberation Sans" font-weight="bold" font-size="15" fill="#fff" text-anchor="middle">O</text><path d="M1513.5 1827 L1523 1818.5 L1545 1818.5 L1554.7 1827 L1544 1827 L1536.5 1838.7 L1534 1833 L1531.5 1838.7 L1524 1827 Z" fill="#1f78b0" stroke="#e0eef5" stroke-width="0.9"/><path d="M1534 1819 V1833" stroke="#e0eef5" stroke-width="0.9"/><rect x="1597" y="1807.6" width="40.8" height="40.3" rx="2" fill="#0e70d8"/><circle cx="1617.4" cy="1827.7" r="15.5" fill="#fff"/><path d="M1605 1827.7 L1611 1822 V1825.5 H1624 V1822 L1630 1827.7 L1624 1833.4 V1830 H1611 V1833.4 Z" fill="#0e70d8"/><circle cx="1701.3" cy="1827.8" r="19" fill="#0c72c0"/><circle cx="1701.3" cy="1827.8" r="16" fill="#fff"/><path d="M1701.3 1810 L1712.5 1833 H1690 Z" fill="#0c72c0"/><path d="M1686.5 1835.5 H1716 A16 16 0 0 1 1686.5 1835.5Z" fill="#1a8ad8"/><rect x="1764" y="1811.5" width="37.6" height="31.4" fill="#000" stroke="#8a8a8a" stroke-width="1.2"/><rect x="1764" y="1811.5" width="37.6" height="3" fill="#b0b0b0"/><text x="1768" y="1826" font-family="Liberation Mono" font-size="8" fill="#ddd">C:\_</text><rect x="1849.5" y="1809.8" width="35.3" height="34.8" fill="none" stroke="#a0a0a0" stroke-width="1.3"/><path d="M1849.5 1820 H1862 M1856 1809.8 V1844.6 M1849.5 1835 H1862" stroke="#a0a0a0" stroke-width="1"/><rect x="1863" y="1811" width="21" height="19.5" fill="url(#pdg1)"/><rect x="1863" y="1832" width="21" height="12" fill="url(#pdg2)"/><rect x="1851" y="1820" width="12" height="13.5" fill="url(#pdg3)"/><rect x="1500" y="1858.6" width="68.0" height="4.2" fill="#4cb4e8"/><rect x="1583.6" y="1858.6" width="68.2" height="4.2" fill="#4cb4e8"/><rect x="1667" y="1858.6" width="68.0" height="4.2" fill="#4cb4e8"/><rect x="1750.4" y="1858.6" width="68.3" height="4.2" fill="#4cb4e8"/><rect x="1826.8" y="1858.6" width="82.0" height="4.2" fill="#4cb4e8"/><path d="M2785 1815 V1841 M2789.5 1815 V1841" stroke="#556a70" stroke-width="1.2"/><path d="M2946 1832.5 L2956 1822.5 L2966 1832.5" stroke="#fff" stroke-width="1.8" fill="none"/><rect x="2983" y="1814" width="27.5" height="27" fill="#000"/><path d="M2996.7 1815 L3010 1839.5 H2983.5 Z" fill="#f01010"/><rect x="2995.6" y="1822" width="2.4" height="10" fill="#fff"/><rect x="2995.6" y="1834" width="2.4" height="2.4" fill="#fff"/><path d="M2986 1816 L2991 1822 M3006 1817 L3003 1823 M2990 1838 L2994 1842" stroke="#fff" stroke-width="1.3"/><rect x="3029" y="1819" width="22" height="16" fill="none" stroke="#fff" stroke-width="1.6"/><path d="M3040 1835 V1840 M3032 1840 H3048" stroke="#fff" stroke-width="1.6"/><rect x="3024" y="1817.5" width="8" height="7" fill="#0d2a32" stroke="#fff" stroke-width="1.3"/><path d="M3065 1823.5 H3071 L3078 1817.5 V1838.5 L3071 1832.5 H3065 Z" fill="none" stroke="#fff" stroke-width="1.5"/><path d="M3082 1824 Q3085 1828 3082 1832 M3086 1820.5 Q3091 1828 3086 1835.5 M3090 1817.5 Q3097 1828 3090 1838.5" stroke="#fff" stroke-width="1.4" fill="none"/><path d="M3239 1815 H3266 V1836 H3248 L3242 1842 V1836 H3239 Z" fill="#fff"/><path d="M3244 1821 H3261 M3244 1825.5 H3261 M3244 1830 H3256" stroke="#0d2a32" stroke-width="1.4"/><circle cx="3265.5" cy="1840" r="13" fill="#2a2a2a" stroke="#6a6a6a" stroke-width="1.5"/><text x="3265.5" y="1847" font-family="Liberation Sans" font-size="19" fill="#fff" text-anchor="middle">6</text><path d="M3301 1795 V1862" stroke="#6a7a80" stroke-width="1"/></svg><div class="t" style="left:2808px;top:1817.5px;font-size:20.5px;color:#e8e8e8;">Collegamenti</div><div class="t" style="left:3111px;top:1797px;width:97px;text-align:center;font-size:20px;line-height:30.5px;color:#fff;">12:26<br>16/09/2022</div></body></html>
